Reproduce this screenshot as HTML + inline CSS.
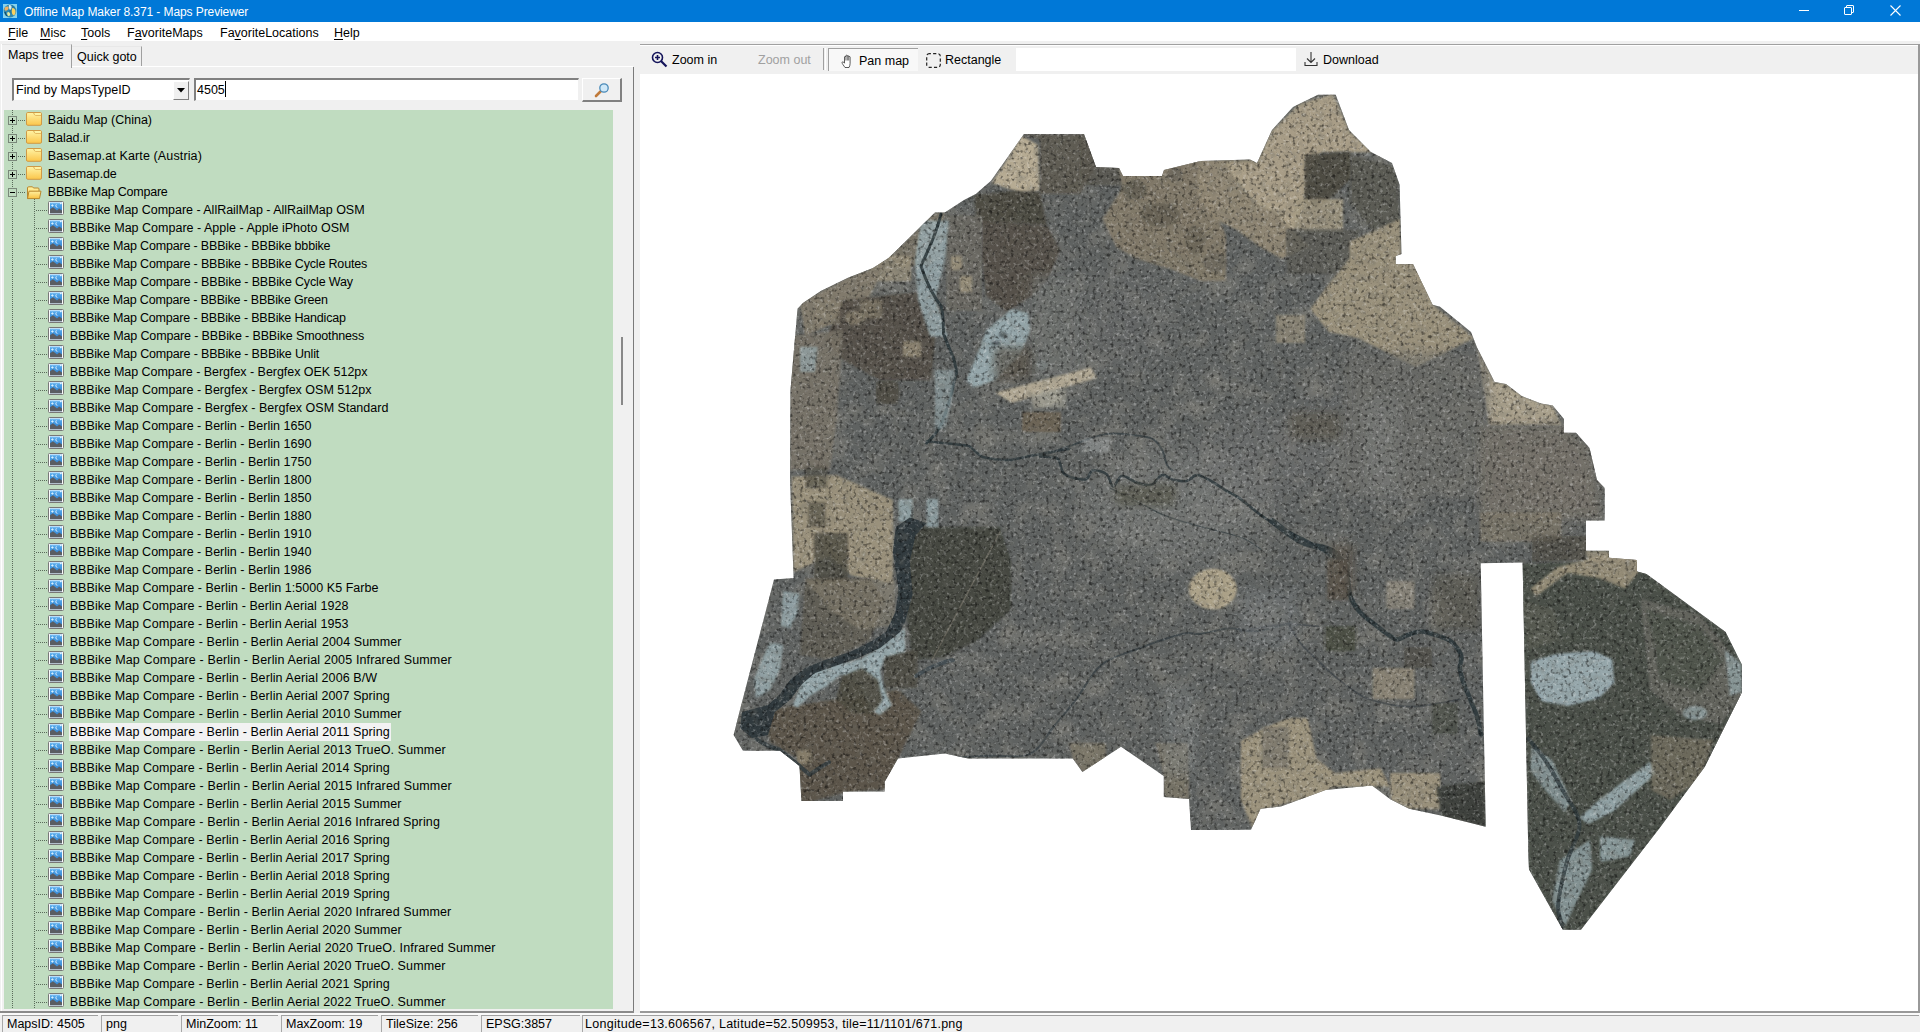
<!DOCTYPE html>
<html><head><meta charset="utf-8"><title>Offline Map Maker 8.371 - Maps Previewer</title>
<style>
*{box-sizing:border-box;margin:0;padding:0}
html,body{width:1920px;height:1032px;overflow:hidden;background:#f0f0f0;font-family:"Liberation Sans",sans-serif;color:#000}
.a{position:absolute}
#title{position:absolute;left:0;top:0;width:1920px;height:22px;background:#0078d7;color:#fff}
#title .t{position:absolute;left:24px;top:5px;font-size:12px;line-height:14px;white-space:pre;letter-spacing:-0.09px}
#menu{position:absolute;left:0;top:22px;width:1920px;height:19px;background:#fff}
#menu span{position:absolute;top:4px;font-size:12.5px;line-height:14px;white-space:pre}
#menu u{text-decoration:underline;text-underline-offset:1.5px;text-decoration-thickness:1px}
#left{position:absolute;left:0;top:41px;width:634px;height:971px;background:#f0f0f0}
.tab{position:absolute;font-size:12.5px;line-height:14px;white-space:pre}
#tree{position:absolute;left:4px;top:110px;width:609px;height:899px;background:#c0dcc0;overflow:hidden}
.tx{position:absolute;height:18px;font-size:12.5px;line-height:18px;white-space:pre;padding:0 1px}
.tx.hl{background:#f2f2f2}
.ic{position:absolute}
.pmbox{position:absolute;left:8px;width:9px;height:9px;border:1px solid #7a887a;background:#c0dcc0}
.pmh{position:absolute;height:1px;background:#000}
.hdot{position:absolute;height:1px;background-image:linear-gradient(90deg,#5a6a5a 50%,transparent 50%);background-size:2px 1px}
.vdot{position:absolute;width:1px;background-image:linear-gradient(180deg,#5a6a5a 50%,transparent 50%);background-size:1px 2px}
#right{position:absolute;left:640px;top:44px;width:1280px;height:968px;background:#fff}
#tb{position:absolute;left:640px;top:44px;width:1278px;height:30px;background:#f0f0f0;border-top:1px solid #a0a0a0;box-shadow:inset 0 1px 0 #fff}
.tbt{position:absolute;font-size:12.5px;line-height:14px;white-space:pre}
#status{position:absolute;left:0;top:1013px;width:1920px;height:19px;background:#f0f0f0;border-top:2px solid #fafafa}
.sp{position:absolute;top:0px;height:17px;font-size:12.5px;line-height:16px;white-space:pre;padding-left:4px;border-left:1px solid #a8a8a8;border-top:1px solid #a0a0a0}
</style></head><body>
<svg width="0" height="0" style="position:absolute"><defs><linearGradient id="fgrad" x1="0" y1="0" x2="0" y2="1"><stop offset="0" stop-color="#fff4a6"/><stop offset="1" stop-color="#fbc54a"/></linearGradient><linearGradient id="fgrad2" x1="0" y1="0" x2="0" y2="1"><stop offset="0" stop-color="#fff0a0"/><stop offset="1" stop-color="#f8c040"/></linearGradient><linearGradient id="sky" x1="0" y1="0" x2="0" y2="1"><stop offset="0" stop-color="#5ab0f0"/><stop offset="1" stop-color="#2a78c8"/></linearGradient></defs></svg>

<div id="title">
  <svg class="a" style="left:3px;top:4px" width="14" height="14" viewBox="0 0 14 14"><rect width="14" height="14" fill="#86d2ee"/><circle cx="7" cy="7" r="6.4" fill="#2f88b0"/><ellipse cx="9" cy="5.5" rx="3" ry="4" fill="#1c6a90" opacity="0.5"/><path d="M6,1 C8,0.8 9,2 8.5,4 C8,6 6.5,6.5 6.2,4.5 C6,3 5.5,2 6,1z" fill="#d8ecf0"/><path d="M1.5,5 C2,2.5 4,2 5.5,3 C6,4.5 5,6 3.5,6.5 C2.5,7 1.3,6.5 1.5,5z" fill="#f0b060"/><path d="M9.5,4 C11.5,4 12.8,6 12.5,8.5 C12.3,10.5 11,12 10,11 C9,10 8.5,8 8.8,6 C9,5 9,4.2 9.5,4z" fill="#f8d060"/><path d="M5,8 C6.5,8 7.5,9.5 7,11 C6.5,12.5 5,12.5 4.5,11 C4,10 4,8.5 5,8z" fill="#e8e8a0"/><path d="M2,8 C2.5,10 3.5,11.5 4,12" stroke="#0e3a50" stroke-width="1" fill="none"/></svg>
  <div class="t">Offline Map Maker 8.371 - Maps Previewer</div>
  <div class="a" style="left:1799px;top:10px;width:10px;height:1px;background:#fff"></div>
  <div class="a" style="left:1846px;top:5px;width:8px;height:8px;border:1px solid #fff;border-radius:1px"></div>
  <div class="a" style="left:1844px;top:7px;width:8px;height:8px;border:1px solid #fff;background:#0078d7;border-radius:1px"></div>
  <svg class="a" style="left:1890px;top:5px" width="11" height="11" viewBox="0 0 11 11"><path d="M0.5 0.5L10.5 10.5M10.5 0.5L0.5 10.5" stroke="#fff" stroke-width="1.1"/></svg>
</div>
<div id="menu">
  <span style="left:8px"><u>F</u>ile</span>
  <span style="left:40px"><u>M</u>isc</span>
  <span style="left:81px"><u>T</u>ools</span>
  <span style="left:127px">F<u>a</u>voriteMaps</span>
  <span style="left:220px">Fa<u>v</u>oriteLocations</span>
  <span style="left:334px"><u>H</u>elp</span>
</div>
<div id="left">
  <!-- tabs -->
  <div class="a" style="left:1px;top:3px;width:632px;height:968px;border-left:1px solid #fff"></div>
  <div class="a" style="left:2px;top:3px;width:70px;height:24px;background:#f0f0f0;border-top:1px solid #e3e3e3;border-right:1px solid #a0a0a0"></div>
  <div class="tab" style="left:8px;top:7px">Maps tree</div>
  <div class="a" style="left:72px;top:5px;width:70px;height:20px;border-right:1px solid #a0a0a0;border-top:1px solid #e8e8e8"></div>
  <div class="tab" style="left:77px;top:9px">Quick goto</div>
  <div class="a" style="left:72px;top:25px;width:561px;height:1px;background:#fff"></div>
  <!-- panel border right -->
  <div class="a" style="left:633px;top:26px;width:1px;height:945px;background:#7a7a7a"></div>
  <!-- combo -->
  <div class="a" style="left:12px;top:37px;width:178px;height:23px;background:#fff;border-top:2px solid #808080;border-left:2px solid #808080;border-right:1px solid #f0f0f0;border-bottom:1px solid #f0f0f0"></div>
  <div class="tab" style="left:16px;top:42px">Find by MapsTypeID</div>
  <div class="a" style="left:173px;top:40px;width:16px;height:19px;background:#f0f0f0;border-right:1px solid #808080;border-bottom:1px solid #808080;border-left:1px solid #fff;border-top:1px solid #fff"></div>
  <svg class="a" style="left:177px;top:47px" width="8" height="5" viewBox="0 0 8 5"><path d="M0 0h8L4 4.5z" fill="#000"/></svg>
  <!-- text input -->
  <div class="a" style="left:194px;top:37px;width:385px;height:23px;background:#fff;border-top:2px solid #808080;border-left:2px solid #808080;border-right:1px solid #f0f0f0;border-bottom:1px solid #f0f0f0"></div>
  <div class="tab" style="left:197px;top:42px">4505</div>
  <div class="a" style="left:225px;top:40px;width:1px;height:16px;background:#000"></div>
  <!-- search btn -->
  <div class="a" style="left:582px;top:37px;width:40px;height:24px;background:#f0f0f0;border-top:1px solid #fff;border-left:1px solid #fff;border-right:2px solid #808080;border-bottom:2px solid #808080"></div>
  <svg class="a" style="left:593px;top:40px" width="18" height="18" viewBox="0 0 18 18"><path d="M3 15l4.5-4.5" stroke="#c07a3a" stroke-width="2.6" stroke-linecap="round"/><circle cx="11" cy="7" r="4.2" fill="#cfe8f8" stroke="#4a8ab8" stroke-width="1.3"/></svg>
  <!-- scroll thumb -->
  <div class="a" style="left:621px;top:296px;width:2px;height:68px;background:#888"></div>
</div>
<div id="tree">
  <div class="vdot" style="left:8px;top:0px;height:84px"></div>
  <div class="vdot" style="left:30px;top:89px;height:810px"></div>
  <div class="vdot" style="left:8px;top:89px;height:810px"></div>
</div>
<div id="treeItems" class="a" style="left:0;top:0;width:613px;height:1009px;overflow:hidden">
<div class="pmbox" style="top:116px"></div>
<div class="pmh" style="top:120px;left:10px;width:5px"></div>
<div class="pmh" style="top:118px;left:12px;width:1px;height:5px"></div>
<div class="hdot" style="top:120px;left:18px;width:8px"></div>
<svg class="ic" style="left:26px;top:112px" width="16" height="14" viewBox="0 0 16 14"><rect x="0.5" y="0.5" width="15" height="12.8" rx="1.3" fill="url(#fgrad)" stroke="#cf9a46"/><path d="M7.6,0.9 Q8.2,3.3 9.8,3.3 H15.1" fill="none" stroke="#dcae55" stroke-width="1"/><rect x="9" y="1.2" width="6" height="1.8" fill="#fff6a8" opacity="0.8"/></svg>
<div class="tx" style="left:46.8px;top:111px;letter-spacing:-0.001px">Baidu Map (China)</div>
<div class="pmbox" style="top:134px"></div>
<div class="pmh" style="top:138px;left:10px;width:5px"></div>
<div class="pmh" style="top:136px;left:12px;width:1px;height:5px"></div>
<div class="hdot" style="top:138px;left:18px;width:8px"></div>
<svg class="ic" style="left:26px;top:130px" width="16" height="14" viewBox="0 0 16 14"><rect x="0.5" y="0.5" width="15" height="12.8" rx="1.3" fill="url(#fgrad)" stroke="#cf9a46"/><path d="M7.6,0.9 Q8.2,3.3 9.8,3.3 H15.1" fill="none" stroke="#dcae55" stroke-width="1"/><rect x="9" y="1.2" width="6" height="1.8" fill="#fff6a8" opacity="0.8"/></svg>
<div class="tx" style="left:46.8px;top:129px;letter-spacing:-0.049px">Balad.ir</div>
<div class="pmbox" style="top:152px"></div>
<div class="pmh" style="top:156px;left:10px;width:5px"></div>
<div class="pmh" style="top:154px;left:12px;width:1px;height:5px"></div>
<div class="hdot" style="top:156px;left:18px;width:8px"></div>
<svg class="ic" style="left:26px;top:148px" width="16" height="14" viewBox="0 0 16 14"><rect x="0.5" y="0.5" width="15" height="12.8" rx="1.3" fill="url(#fgrad)" stroke="#cf9a46"/><path d="M7.6,0.9 Q8.2,3.3 9.8,3.3 H15.1" fill="none" stroke="#dcae55" stroke-width="1"/><rect x="9" y="1.2" width="6" height="1.8" fill="#fff6a8" opacity="0.8"/></svg>
<div class="tx" style="left:46.8px;top:147px;letter-spacing:0.132px">Basemap.at Karte (Austria)</div>
<div class="pmbox" style="top:170px"></div>
<div class="pmh" style="top:174px;left:10px;width:5px"></div>
<div class="pmh" style="top:172px;left:12px;width:1px;height:5px"></div>
<div class="hdot" style="top:174px;left:18px;width:8px"></div>
<svg class="ic" style="left:26px;top:166px" width="16" height="14" viewBox="0 0 16 14"><rect x="0.5" y="0.5" width="15" height="12.8" rx="1.3" fill="url(#fgrad)" stroke="#cf9a46"/><path d="M7.6,0.9 Q8.2,3.3 9.8,3.3 H15.1" fill="none" stroke="#dcae55" stroke-width="1"/><rect x="9" y="1.2" width="6" height="1.8" fill="#fff6a8" opacity="0.8"/></svg>
<div class="tx" style="left:46.8px;top:165px;letter-spacing:-0.139px">Basemap.de</div>
<div class="pmbox" style="top:188px"></div>
<div class="pmh" style="top:192px;left:10px;width:5px"></div>
<div class="hdot" style="top:192px;left:18px;width:8px"></div>
<svg class="ic" style="left:26px;top:186px" width="16" height="14" viewBox="0 0 16 14"><path d="M1.5,12.5 V2 Q1.5,0.8 2.7,0.8 H6.5 L7.5,2 H12 Q13,2 13,3 V5" fill="url(#fgrad)" stroke="#b8862c"/><path d="M1.5,12.6 L3,5.2 H15 L13.5,12.6 Z" fill="url(#fgrad2)" stroke="#b8862c" stroke-linejoin="round"/></svg>
<div class="tx" style="left:46.8px;top:183px;letter-spacing:-0.215px">BBBike Map Compare</div>
<div class="hdot" style="top:210px;left:36px;width:12px"></div>
<svg class="ic" style="left:48px;top:201px" width="16" height="14" viewBox="0 0 16 14"><rect x="0.5" y="0.5" width="15" height="13" rx="1" fill="#fbfbfb" stroke="#777"/><rect x="2" y="1.6" width="12" height="10.6" fill="url(#sky)"/><path d="M2,12.2 V8.2 L5,6.2 L9,9.4 L11.2,7.6 L14,9.6 V12.2 Z" fill="#5a5d62"/><path d="M9.2,3 a1.8,1.8 0 1 0 1.4,3 a1.3,1.3 0 1 1 -1.4,-3z" fill="#f0f8ff"/><path d="M3.2,4.5h2.4M4.4,3.3v2.4" stroke="#d8f0ff" stroke-width="0.9"/><path d="M12,2.5h1.6M12.8,1.7v1.6" stroke="#fff" stroke-width="0.8"/><rect x="2.4" y="1.6" width="11.2" height="0.8" fill="#bfe3ff" opacity="0.6"/></svg>
<div class="tx" style="left:68.7px;top:201px;letter-spacing:-0.022px">BBBike Map Compare - AllRailMap - AllRailMap OSM</div>
<div class="hdot" style="top:228px;left:36px;width:12px"></div>
<svg class="ic" style="left:48px;top:219px" width="16" height="14" viewBox="0 0 16 14"><rect x="0.5" y="0.5" width="15" height="13" rx="1" fill="#fbfbfb" stroke="#777"/><rect x="2" y="1.6" width="12" height="10.6" fill="url(#sky)"/><path d="M2,12.2 V8.2 L5,6.2 L9,9.4 L11.2,7.6 L14,9.6 V12.2 Z" fill="#5a5d62"/><path d="M9.2,3 a1.8,1.8 0 1 0 1.4,3 a1.3,1.3 0 1 1 -1.4,-3z" fill="#f0f8ff"/><path d="M3.2,4.5h2.4M4.4,3.3v2.4" stroke="#d8f0ff" stroke-width="0.9"/><path d="M12,2.5h1.6M12.8,1.7v1.6" stroke="#fff" stroke-width="0.8"/><rect x="2.4" y="1.6" width="11.2" height="0.8" fill="#bfe3ff" opacity="0.6"/></svg>
<div class="tx" style="left:68.7px;top:219px;letter-spacing:0.009px">BBBike Map Compare - Apple - Apple iPhoto OSM</div>
<div class="hdot" style="top:246px;left:36px;width:12px"></div>
<svg class="ic" style="left:48px;top:237px" width="16" height="14" viewBox="0 0 16 14"><rect x="0.5" y="0.5" width="15" height="13" rx="1" fill="#fbfbfb" stroke="#777"/><rect x="2" y="1.6" width="12" height="10.6" fill="url(#sky)"/><path d="M2,12.2 V8.2 L5,6.2 L9,9.4 L11.2,7.6 L14,9.6 V12.2 Z" fill="#5a5d62"/><path d="M9.2,3 a1.8,1.8 0 1 0 1.4,3 a1.3,1.3 0 1 1 -1.4,-3z" fill="#f0f8ff"/><path d="M3.2,4.5h2.4M4.4,3.3v2.4" stroke="#d8f0ff" stroke-width="0.9"/><path d="M12,2.5h1.6M12.8,1.7v1.6" stroke="#fff" stroke-width="0.8"/><rect x="2.4" y="1.6" width="11.2" height="0.8" fill="#bfe3ff" opacity="0.6"/></svg>
<div class="tx" style="left:68.7px;top:237px;letter-spacing:-0.174px">BBBike Map Compare - BBBike - BBBike bbbike</div>
<div class="hdot" style="top:264px;left:36px;width:12px"></div>
<svg class="ic" style="left:48px;top:255px" width="16" height="14" viewBox="0 0 16 14"><rect x="0.5" y="0.5" width="15" height="13" rx="1" fill="#fbfbfb" stroke="#777"/><rect x="2" y="1.6" width="12" height="10.6" fill="url(#sky)"/><path d="M2,12.2 V8.2 L5,6.2 L9,9.4 L11.2,7.6 L14,9.6 V12.2 Z" fill="#5a5d62"/><path d="M9.2,3 a1.8,1.8 0 1 0 1.4,3 a1.3,1.3 0 1 1 -1.4,-3z" fill="#f0f8ff"/><path d="M3.2,4.5h2.4M4.4,3.3v2.4" stroke="#d8f0ff" stroke-width="0.9"/><path d="M12,2.5h1.6M12.8,1.7v1.6" stroke="#fff" stroke-width="0.8"/><rect x="2.4" y="1.6" width="11.2" height="0.8" fill="#bfe3ff" opacity="0.6"/></svg>
<div class="tx" style="left:68.7px;top:255px;letter-spacing:-0.169px">BBBike Map Compare - BBBike - BBBike Cycle Routes</div>
<div class="hdot" style="top:282px;left:36px;width:12px"></div>
<svg class="ic" style="left:48px;top:273px" width="16" height="14" viewBox="0 0 16 14"><rect x="0.5" y="0.5" width="15" height="13" rx="1" fill="#fbfbfb" stroke="#777"/><rect x="2" y="1.6" width="12" height="10.6" fill="url(#sky)"/><path d="M2,12.2 V8.2 L5,6.2 L9,9.4 L11.2,7.6 L14,9.6 V12.2 Z" fill="#5a5d62"/><path d="M9.2,3 a1.8,1.8 0 1 0 1.4,3 a1.3,1.3 0 1 1 -1.4,-3z" fill="#f0f8ff"/><path d="M3.2,4.5h2.4M4.4,3.3v2.4" stroke="#d8f0ff" stroke-width="0.9"/><path d="M12,2.5h1.6M12.8,1.7v1.6" stroke="#fff" stroke-width="0.8"/><rect x="2.4" y="1.6" width="11.2" height="0.8" fill="#bfe3ff" opacity="0.6"/></svg>
<div class="tx" style="left:68.7px;top:273px;letter-spacing:-0.163px">BBBike Map Compare - BBBike - BBBike Cycle Way</div>
<div class="hdot" style="top:300px;left:36px;width:12px"></div>
<svg class="ic" style="left:48px;top:291px" width="16" height="14" viewBox="0 0 16 14"><rect x="0.5" y="0.5" width="15" height="13" rx="1" fill="#fbfbfb" stroke="#777"/><rect x="2" y="1.6" width="12" height="10.6" fill="url(#sky)"/><path d="M2,12.2 V8.2 L5,6.2 L9,9.4 L11.2,7.6 L14,9.6 V12.2 Z" fill="#5a5d62"/><path d="M9.2,3 a1.8,1.8 0 1 0 1.4,3 a1.3,1.3 0 1 1 -1.4,-3z" fill="#f0f8ff"/><path d="M3.2,4.5h2.4M4.4,3.3v2.4" stroke="#d8f0ff" stroke-width="0.9"/><path d="M12,2.5h1.6M12.8,1.7v1.6" stroke="#fff" stroke-width="0.8"/><rect x="2.4" y="1.6" width="11.2" height="0.8" fill="#bfe3ff" opacity="0.6"/></svg>
<div class="tx" style="left:68.7px;top:291px;letter-spacing:-0.192px">BBBike Map Compare - BBBike - BBBike Green</div>
<div class="hdot" style="top:318px;left:36px;width:12px"></div>
<svg class="ic" style="left:48px;top:309px" width="16" height="14" viewBox="0 0 16 14"><rect x="0.5" y="0.5" width="15" height="13" rx="1" fill="#fbfbfb" stroke="#777"/><rect x="2" y="1.6" width="12" height="10.6" fill="url(#sky)"/><path d="M2,12.2 V8.2 L5,6.2 L9,9.4 L11.2,7.6 L14,9.6 V12.2 Z" fill="#5a5d62"/><path d="M9.2,3 a1.8,1.8 0 1 0 1.4,3 a1.3,1.3 0 1 1 -1.4,-3z" fill="#f0f8ff"/><path d="M3.2,4.5h2.4M4.4,3.3v2.4" stroke="#d8f0ff" stroke-width="0.9"/><path d="M12,2.5h1.6M12.8,1.7v1.6" stroke="#fff" stroke-width="0.8"/><rect x="2.4" y="1.6" width="11.2" height="0.8" fill="#bfe3ff" opacity="0.6"/></svg>
<div class="tx" style="left:68.7px;top:309px;letter-spacing:-0.179px">BBBike Map Compare - BBBike - BBBike Handicap</div>
<div class="hdot" style="top:336px;left:36px;width:12px"></div>
<svg class="ic" style="left:48px;top:327px" width="16" height="14" viewBox="0 0 16 14"><rect x="0.5" y="0.5" width="15" height="13" rx="1" fill="#fbfbfb" stroke="#777"/><rect x="2" y="1.6" width="12" height="10.6" fill="url(#sky)"/><path d="M2,12.2 V8.2 L5,6.2 L9,9.4 L11.2,7.6 L14,9.6 V12.2 Z" fill="#5a5d62"/><path d="M9.2,3 a1.8,1.8 0 1 0 1.4,3 a1.3,1.3 0 1 1 -1.4,-3z" fill="#f0f8ff"/><path d="M3.2,4.5h2.4M4.4,3.3v2.4" stroke="#d8f0ff" stroke-width="0.9"/><path d="M12,2.5h1.6M12.8,1.7v1.6" stroke="#fff" stroke-width="0.8"/><rect x="2.4" y="1.6" width="11.2" height="0.8" fill="#bfe3ff" opacity="0.6"/></svg>
<div class="tx" style="left:68.7px;top:327px;letter-spacing:-0.137px">BBBike Map Compare - BBBike - BBBike Smoothness</div>
<div class="hdot" style="top:354px;left:36px;width:12px"></div>
<svg class="ic" style="left:48px;top:345px" width="16" height="14" viewBox="0 0 16 14"><rect x="0.5" y="0.5" width="15" height="13" rx="1" fill="#fbfbfb" stroke="#777"/><rect x="2" y="1.6" width="12" height="10.6" fill="url(#sky)"/><path d="M2,12.2 V8.2 L5,6.2 L9,9.4 L11.2,7.6 L14,9.6 V12.2 Z" fill="#5a5d62"/><path d="M9.2,3 a1.8,1.8 0 1 0 1.4,3 a1.3,1.3 0 1 1 -1.4,-3z" fill="#f0f8ff"/><path d="M3.2,4.5h2.4M4.4,3.3v2.4" stroke="#d8f0ff" stroke-width="0.9"/><path d="M12,2.5h1.6M12.8,1.7v1.6" stroke="#fff" stroke-width="0.8"/><rect x="2.4" y="1.6" width="11.2" height="0.8" fill="#bfe3ff" opacity="0.6"/></svg>
<div class="tx" style="left:68.7px;top:345px;letter-spacing:-0.165px">BBBike Map Compare - BBBike - BBBike Unlit</div>
<div class="hdot" style="top:372px;left:36px;width:12px"></div>
<svg class="ic" style="left:48px;top:363px" width="16" height="14" viewBox="0 0 16 14"><rect x="0.5" y="0.5" width="15" height="13" rx="1" fill="#fbfbfb" stroke="#777"/><rect x="2" y="1.6" width="12" height="10.6" fill="url(#sky)"/><path d="M2,12.2 V8.2 L5,6.2 L9,9.4 L11.2,7.6 L14,9.6 V12.2 Z" fill="#5a5d62"/><path d="M9.2,3 a1.8,1.8 0 1 0 1.4,3 a1.3,1.3 0 1 1 -1.4,-3z" fill="#f0f8ff"/><path d="M3.2,4.5h2.4M4.4,3.3v2.4" stroke="#d8f0ff" stroke-width="0.9"/><path d="M12,2.5h1.6M12.8,1.7v1.6" stroke="#fff" stroke-width="0.8"/><rect x="2.4" y="1.6" width="11.2" height="0.8" fill="#bfe3ff" opacity="0.6"/></svg>
<div class="tx" style="left:68.7px;top:363px;letter-spacing:-0.034px">BBBike Map Compare - Bergfex - Bergfex OEK 512px</div>
<div class="hdot" style="top:390px;left:36px;width:12px"></div>
<svg class="ic" style="left:48px;top:381px" width="16" height="14" viewBox="0 0 16 14"><rect x="0.5" y="0.5" width="15" height="13" rx="1" fill="#fbfbfb" stroke="#777"/><rect x="2" y="1.6" width="12" height="10.6" fill="url(#sky)"/><path d="M2,12.2 V8.2 L5,6.2 L9,9.4 L11.2,7.6 L14,9.6 V12.2 Z" fill="#5a5d62"/><path d="M9.2,3 a1.8,1.8 0 1 0 1.4,3 a1.3,1.3 0 1 1 -1.4,-3z" fill="#f0f8ff"/><path d="M3.2,4.5h2.4M4.4,3.3v2.4" stroke="#d8f0ff" stroke-width="0.9"/><path d="M12,2.5h1.6M12.8,1.7v1.6" stroke="#fff" stroke-width="0.8"/><rect x="2.4" y="1.6" width="11.2" height="0.8" fill="#bfe3ff" opacity="0.6"/></svg>
<div class="tx" style="left:68.7px;top:381px;letter-spacing:0.004px">BBBike Map Compare - Bergfex - Bergfex OSM 512px</div>
<div class="hdot" style="top:408px;left:36px;width:12px"></div>
<svg class="ic" style="left:48px;top:399px" width="16" height="14" viewBox="0 0 16 14"><rect x="0.5" y="0.5" width="15" height="13" rx="1" fill="#fbfbfb" stroke="#777"/><rect x="2" y="1.6" width="12" height="10.6" fill="url(#sky)"/><path d="M2,12.2 V8.2 L5,6.2 L9,9.4 L11.2,7.6 L14,9.6 V12.2 Z" fill="#5a5d62"/><path d="M9.2,3 a1.8,1.8 0 1 0 1.4,3 a1.3,1.3 0 1 1 -1.4,-3z" fill="#f0f8ff"/><path d="M3.2,4.5h2.4M4.4,3.3v2.4" stroke="#d8f0ff" stroke-width="0.9"/><path d="M12,2.5h1.6M12.8,1.7v1.6" stroke="#fff" stroke-width="0.8"/><rect x="2.4" y="1.6" width="11.2" height="0.8" fill="#bfe3ff" opacity="0.6"/></svg>
<div class="tx" style="left:68.7px;top:399px;letter-spacing:0.010px">BBBike Map Compare - Bergfex - Bergfex OSM Standard</div>
<div class="hdot" style="top:426px;left:36px;width:12px"></div>
<svg class="ic" style="left:48px;top:417px" width="16" height="14" viewBox="0 0 16 14"><rect x="0.5" y="0.5" width="15" height="13" rx="1" fill="#fbfbfb" stroke="#777"/><rect x="2" y="1.6" width="12" height="10.6" fill="url(#sky)"/><path d="M2,12.2 V8.2 L5,6.2 L9,9.4 L11.2,7.6 L14,9.6 V12.2 Z" fill="#5a5d62"/><path d="M9.2,3 a1.8,1.8 0 1 0 1.4,3 a1.3,1.3 0 1 1 -1.4,-3z" fill="#f0f8ff"/><path d="M3.2,4.5h2.4M4.4,3.3v2.4" stroke="#d8f0ff" stroke-width="0.9"/><path d="M12,2.5h1.6M12.8,1.7v1.6" stroke="#fff" stroke-width="0.8"/><rect x="2.4" y="1.6" width="11.2" height="0.8" fill="#bfe3ff" opacity="0.6"/></svg>
<div class="tx" style="left:68.7px;top:417px;letter-spacing:0.015px">BBBike Map Compare - Berlin - Berlin 1650</div>
<div class="hdot" style="top:444px;left:36px;width:12px"></div>
<svg class="ic" style="left:48px;top:435px" width="16" height="14" viewBox="0 0 16 14"><rect x="0.5" y="0.5" width="15" height="13" rx="1" fill="#fbfbfb" stroke="#777"/><rect x="2" y="1.6" width="12" height="10.6" fill="url(#sky)"/><path d="M2,12.2 V8.2 L5,6.2 L9,9.4 L11.2,7.6 L14,9.6 V12.2 Z" fill="#5a5d62"/><path d="M9.2,3 a1.8,1.8 0 1 0 1.4,3 a1.3,1.3 0 1 1 -1.4,-3z" fill="#f0f8ff"/><path d="M3.2,4.5h2.4M4.4,3.3v2.4" stroke="#d8f0ff" stroke-width="0.9"/><path d="M12,2.5h1.6M12.8,1.7v1.6" stroke="#fff" stroke-width="0.8"/><rect x="2.4" y="1.6" width="11.2" height="0.8" fill="#bfe3ff" opacity="0.6"/></svg>
<div class="tx" style="left:68.7px;top:435px;letter-spacing:0.015px">BBBike Map Compare - Berlin - Berlin 1690</div>
<div class="hdot" style="top:462px;left:36px;width:12px"></div>
<svg class="ic" style="left:48px;top:453px" width="16" height="14" viewBox="0 0 16 14"><rect x="0.5" y="0.5" width="15" height="13" rx="1" fill="#fbfbfb" stroke="#777"/><rect x="2" y="1.6" width="12" height="10.6" fill="url(#sky)"/><path d="M2,12.2 V8.2 L5,6.2 L9,9.4 L11.2,7.6 L14,9.6 V12.2 Z" fill="#5a5d62"/><path d="M9.2,3 a1.8,1.8 0 1 0 1.4,3 a1.3,1.3 0 1 1 -1.4,-3z" fill="#f0f8ff"/><path d="M3.2,4.5h2.4M4.4,3.3v2.4" stroke="#d8f0ff" stroke-width="0.9"/><path d="M12,2.5h1.6M12.8,1.7v1.6" stroke="#fff" stroke-width="0.8"/><rect x="2.4" y="1.6" width="11.2" height="0.8" fill="#bfe3ff" opacity="0.6"/></svg>
<div class="tx" style="left:68.7px;top:453px;letter-spacing:0.015px">BBBike Map Compare - Berlin - Berlin 1750</div>
<div class="hdot" style="top:480px;left:36px;width:12px"></div>
<svg class="ic" style="left:48px;top:471px" width="16" height="14" viewBox="0 0 16 14"><rect x="0.5" y="0.5" width="15" height="13" rx="1" fill="#fbfbfb" stroke="#777"/><rect x="2" y="1.6" width="12" height="10.6" fill="url(#sky)"/><path d="M2,12.2 V8.2 L5,6.2 L9,9.4 L11.2,7.6 L14,9.6 V12.2 Z" fill="#5a5d62"/><path d="M9.2,3 a1.8,1.8 0 1 0 1.4,3 a1.3,1.3 0 1 1 -1.4,-3z" fill="#f0f8ff"/><path d="M3.2,4.5h2.4M4.4,3.3v2.4" stroke="#d8f0ff" stroke-width="0.9"/><path d="M12,2.5h1.6M12.8,1.7v1.6" stroke="#fff" stroke-width="0.8"/><rect x="2.4" y="1.6" width="11.2" height="0.8" fill="#bfe3ff" opacity="0.6"/></svg>
<div class="tx" style="left:68.7px;top:471px;letter-spacing:0.015px">BBBike Map Compare - Berlin - Berlin 1800</div>
<div class="hdot" style="top:498px;left:36px;width:12px"></div>
<svg class="ic" style="left:48px;top:489px" width="16" height="14" viewBox="0 0 16 14"><rect x="0.5" y="0.5" width="15" height="13" rx="1" fill="#fbfbfb" stroke="#777"/><rect x="2" y="1.6" width="12" height="10.6" fill="url(#sky)"/><path d="M2,12.2 V8.2 L5,6.2 L9,9.4 L11.2,7.6 L14,9.6 V12.2 Z" fill="#5a5d62"/><path d="M9.2,3 a1.8,1.8 0 1 0 1.4,3 a1.3,1.3 0 1 1 -1.4,-3z" fill="#f0f8ff"/><path d="M3.2,4.5h2.4M4.4,3.3v2.4" stroke="#d8f0ff" stroke-width="0.9"/><path d="M12,2.5h1.6M12.8,1.7v1.6" stroke="#fff" stroke-width="0.8"/><rect x="2.4" y="1.6" width="11.2" height="0.8" fill="#bfe3ff" opacity="0.6"/></svg>
<div class="tx" style="left:68.7px;top:489px;letter-spacing:0.015px">BBBike Map Compare - Berlin - Berlin 1850</div>
<div class="hdot" style="top:516px;left:36px;width:12px"></div>
<svg class="ic" style="left:48px;top:507px" width="16" height="14" viewBox="0 0 16 14"><rect x="0.5" y="0.5" width="15" height="13" rx="1" fill="#fbfbfb" stroke="#777"/><rect x="2" y="1.6" width="12" height="10.6" fill="url(#sky)"/><path d="M2,12.2 V8.2 L5,6.2 L9,9.4 L11.2,7.6 L14,9.6 V12.2 Z" fill="#5a5d62"/><path d="M9.2,3 a1.8,1.8 0 1 0 1.4,3 a1.3,1.3 0 1 1 -1.4,-3z" fill="#f0f8ff"/><path d="M3.2,4.5h2.4M4.4,3.3v2.4" stroke="#d8f0ff" stroke-width="0.9"/><path d="M12,2.5h1.6M12.8,1.7v1.6" stroke="#fff" stroke-width="0.8"/><rect x="2.4" y="1.6" width="11.2" height="0.8" fill="#bfe3ff" opacity="0.6"/></svg>
<div class="tx" style="left:68.7px;top:507px;letter-spacing:0.015px">BBBike Map Compare - Berlin - Berlin 1880</div>
<div class="hdot" style="top:534px;left:36px;width:12px"></div>
<svg class="ic" style="left:48px;top:525px" width="16" height="14" viewBox="0 0 16 14"><rect x="0.5" y="0.5" width="15" height="13" rx="1" fill="#fbfbfb" stroke="#777"/><rect x="2" y="1.6" width="12" height="10.6" fill="url(#sky)"/><path d="M2,12.2 V8.2 L5,6.2 L9,9.4 L11.2,7.6 L14,9.6 V12.2 Z" fill="#5a5d62"/><path d="M9.2,3 a1.8,1.8 0 1 0 1.4,3 a1.3,1.3 0 1 1 -1.4,-3z" fill="#f0f8ff"/><path d="M3.2,4.5h2.4M4.4,3.3v2.4" stroke="#d8f0ff" stroke-width="0.9"/><path d="M12,2.5h1.6M12.8,1.7v1.6" stroke="#fff" stroke-width="0.8"/><rect x="2.4" y="1.6" width="11.2" height="0.8" fill="#bfe3ff" opacity="0.6"/></svg>
<div class="tx" style="left:68.7px;top:525px;letter-spacing:0.015px">BBBike Map Compare - Berlin - Berlin 1910</div>
<div class="hdot" style="top:552px;left:36px;width:12px"></div>
<svg class="ic" style="left:48px;top:543px" width="16" height="14" viewBox="0 0 16 14"><rect x="0.5" y="0.5" width="15" height="13" rx="1" fill="#fbfbfb" stroke="#777"/><rect x="2" y="1.6" width="12" height="10.6" fill="url(#sky)"/><path d="M2,12.2 V8.2 L5,6.2 L9,9.4 L11.2,7.6 L14,9.6 V12.2 Z" fill="#5a5d62"/><path d="M9.2,3 a1.8,1.8 0 1 0 1.4,3 a1.3,1.3 0 1 1 -1.4,-3z" fill="#f0f8ff"/><path d="M3.2,4.5h2.4M4.4,3.3v2.4" stroke="#d8f0ff" stroke-width="0.9"/><path d="M12,2.5h1.6M12.8,1.7v1.6" stroke="#fff" stroke-width="0.8"/><rect x="2.4" y="1.6" width="11.2" height="0.8" fill="#bfe3ff" opacity="0.6"/></svg>
<div class="tx" style="left:68.7px;top:543px;letter-spacing:0.015px">BBBike Map Compare - Berlin - Berlin 1940</div>
<div class="hdot" style="top:570px;left:36px;width:12px"></div>
<svg class="ic" style="left:48px;top:561px" width="16" height="14" viewBox="0 0 16 14"><rect x="0.5" y="0.5" width="15" height="13" rx="1" fill="#fbfbfb" stroke="#777"/><rect x="2" y="1.6" width="12" height="10.6" fill="url(#sky)"/><path d="M2,12.2 V8.2 L5,6.2 L9,9.4 L11.2,7.6 L14,9.6 V12.2 Z" fill="#5a5d62"/><path d="M9.2,3 a1.8,1.8 0 1 0 1.4,3 a1.3,1.3 0 1 1 -1.4,-3z" fill="#f0f8ff"/><path d="M3.2,4.5h2.4M4.4,3.3v2.4" stroke="#d8f0ff" stroke-width="0.9"/><path d="M12,2.5h1.6M12.8,1.7v1.6" stroke="#fff" stroke-width="0.8"/><rect x="2.4" y="1.6" width="11.2" height="0.8" fill="#bfe3ff" opacity="0.6"/></svg>
<div class="tx" style="left:68.7px;top:561px;letter-spacing:0.015px">BBBike Map Compare - Berlin - Berlin 1986</div>
<div class="hdot" style="top:588px;left:36px;width:12px"></div>
<svg class="ic" style="left:48px;top:579px" width="16" height="14" viewBox="0 0 16 14"><rect x="0.5" y="0.5" width="15" height="13" rx="1" fill="#fbfbfb" stroke="#777"/><rect x="2" y="1.6" width="12" height="10.6" fill="url(#sky)"/><path d="M2,12.2 V8.2 L5,6.2 L9,9.4 L11.2,7.6 L14,9.6 V12.2 Z" fill="#5a5d62"/><path d="M9.2,3 a1.8,1.8 0 1 0 1.4,3 a1.3,1.3 0 1 1 -1.4,-3z" fill="#f0f8ff"/><path d="M3.2,4.5h2.4M4.4,3.3v2.4" stroke="#d8f0ff" stroke-width="0.9"/><path d="M12,2.5h1.6M12.8,1.7v1.6" stroke="#fff" stroke-width="0.8"/><rect x="2.4" y="1.6" width="11.2" height="0.8" fill="#bfe3ff" opacity="0.6"/></svg>
<div class="tx" style="left:68.7px;top:579px;letter-spacing:0.048px">BBBike Map Compare - Berlin - Berlin 1:5000 K5 Farbe</div>
<div class="hdot" style="top:606px;left:36px;width:12px"></div>
<svg class="ic" style="left:48px;top:597px" width="16" height="14" viewBox="0 0 16 14"><rect x="0.5" y="0.5" width="15" height="13" rx="1" fill="#fbfbfb" stroke="#777"/><rect x="2" y="1.6" width="12" height="10.6" fill="url(#sky)"/><path d="M2,12.2 V8.2 L5,6.2 L9,9.4 L11.2,7.6 L14,9.6 V12.2 Z" fill="#5a5d62"/><path d="M9.2,3 a1.8,1.8 0 1 0 1.4,3 a1.3,1.3 0 1 1 -1.4,-3z" fill="#f0f8ff"/><path d="M3.2,4.5h2.4M4.4,3.3v2.4" stroke="#d8f0ff" stroke-width="0.9"/><path d="M12,2.5h1.6M12.8,1.7v1.6" stroke="#fff" stroke-width="0.8"/><rect x="2.4" y="1.6" width="11.2" height="0.8" fill="#bfe3ff" opacity="0.6"/></svg>
<div class="tx" style="left:68.7px;top:597px;letter-spacing:0.062px">BBBike Map Compare - Berlin - Berlin Aerial 1928</div>
<div class="hdot" style="top:624px;left:36px;width:12px"></div>
<svg class="ic" style="left:48px;top:615px" width="16" height="14" viewBox="0 0 16 14"><rect x="0.5" y="0.5" width="15" height="13" rx="1" fill="#fbfbfb" stroke="#777"/><rect x="2" y="1.6" width="12" height="10.6" fill="url(#sky)"/><path d="M2,12.2 V8.2 L5,6.2 L9,9.4 L11.2,7.6 L14,9.6 V12.2 Z" fill="#5a5d62"/><path d="M9.2,3 a1.8,1.8 0 1 0 1.4,3 a1.3,1.3 0 1 1 -1.4,-3z" fill="#f0f8ff"/><path d="M3.2,4.5h2.4M4.4,3.3v2.4" stroke="#d8f0ff" stroke-width="0.9"/><path d="M12,2.5h1.6M12.8,1.7v1.6" stroke="#fff" stroke-width="0.8"/><rect x="2.4" y="1.6" width="11.2" height="0.8" fill="#bfe3ff" opacity="0.6"/></svg>
<div class="tx" style="left:68.7px;top:615px;letter-spacing:0.062px">BBBike Map Compare - Berlin - Berlin Aerial 1953</div>
<div class="hdot" style="top:642px;left:36px;width:12px"></div>
<svg class="ic" style="left:48px;top:633px" width="16" height="14" viewBox="0 0 16 14"><rect x="0.5" y="0.5" width="15" height="13" rx="1" fill="#fbfbfb" stroke="#777"/><rect x="2" y="1.6" width="12" height="10.6" fill="url(#sky)"/><path d="M2,12.2 V8.2 L5,6.2 L9,9.4 L11.2,7.6 L14,9.6 V12.2 Z" fill="#5a5d62"/><path d="M9.2,3 a1.8,1.8 0 1 0 1.4,3 a1.3,1.3 0 1 1 -1.4,-3z" fill="#f0f8ff"/><path d="M3.2,4.5h2.4M4.4,3.3v2.4" stroke="#d8f0ff" stroke-width="0.9"/><path d="M12,2.5h1.6M12.8,1.7v1.6" stroke="#fff" stroke-width="0.8"/><rect x="2.4" y="1.6" width="11.2" height="0.8" fill="#bfe3ff" opacity="0.6"/></svg>
<div class="tx" style="left:68.7px;top:633px;letter-spacing:0.098px">BBBike Map Compare - Berlin - Berlin Aerial 2004 Summer</div>
<div class="hdot" style="top:660px;left:36px;width:12px"></div>
<svg class="ic" style="left:48px;top:651px" width="16" height="14" viewBox="0 0 16 14"><rect x="0.5" y="0.5" width="15" height="13" rx="1" fill="#fbfbfb" stroke="#777"/><rect x="2" y="1.6" width="12" height="10.6" fill="url(#sky)"/><path d="M2,12.2 V8.2 L5,6.2 L9,9.4 L11.2,7.6 L14,9.6 V12.2 Z" fill="#5a5d62"/><path d="M9.2,3 a1.8,1.8 0 1 0 1.4,3 a1.3,1.3 0 1 1 -1.4,-3z" fill="#f0f8ff"/><path d="M3.2,4.5h2.4M4.4,3.3v2.4" stroke="#d8f0ff" stroke-width="0.9"/><path d="M12,2.5h1.6M12.8,1.7v1.6" stroke="#fff" stroke-width="0.8"/><rect x="2.4" y="1.6" width="11.2" height="0.8" fill="#bfe3ff" opacity="0.6"/></svg>
<div class="tx" style="left:68.7px;top:651px;letter-spacing:0.141px">BBBike Map Compare - Berlin - Berlin Aerial 2005 Infrared Summer</div>
<div class="hdot" style="top:678px;left:36px;width:12px"></div>
<svg class="ic" style="left:48px;top:669px" width="16" height="14" viewBox="0 0 16 14"><rect x="0.5" y="0.5" width="15" height="13" rx="1" fill="#fbfbfb" stroke="#777"/><rect x="2" y="1.6" width="12" height="10.6" fill="url(#sky)"/><path d="M2,12.2 V8.2 L5,6.2 L9,9.4 L11.2,7.6 L14,9.6 V12.2 Z" fill="#5a5d62"/><path d="M9.2,3 a1.8,1.8 0 1 0 1.4,3 a1.3,1.3 0 1 1 -1.4,-3z" fill="#f0f8ff"/><path d="M3.2,4.5h2.4M4.4,3.3v2.4" stroke="#d8f0ff" stroke-width="0.9"/><path d="M12,2.5h1.6M12.8,1.7v1.6" stroke="#fff" stroke-width="0.8"/><rect x="2.4" y="1.6" width="11.2" height="0.8" fill="#bfe3ff" opacity="0.6"/></svg>
<div class="tx" style="left:68.7px;top:669px;letter-spacing:0.088px">BBBike Map Compare - Berlin - Berlin Aerial 2006 B/W</div>
<div class="hdot" style="top:696px;left:36px;width:12px"></div>
<svg class="ic" style="left:48px;top:687px" width="16" height="14" viewBox="0 0 16 14"><rect x="0.5" y="0.5" width="15" height="13" rx="1" fill="#fbfbfb" stroke="#777"/><rect x="2" y="1.6" width="12" height="10.6" fill="url(#sky)"/><path d="M2,12.2 V8.2 L5,6.2 L9,9.4 L11.2,7.6 L14,9.6 V12.2 Z" fill="#5a5d62"/><path d="M9.2,3 a1.8,1.8 0 1 0 1.4,3 a1.3,1.3 0 1 1 -1.4,-3z" fill="#f0f8ff"/><path d="M3.2,4.5h2.4M4.4,3.3v2.4" stroke="#d8f0ff" stroke-width="0.9"/><path d="M12,2.5h1.6M12.8,1.7v1.6" stroke="#fff" stroke-width="0.8"/><rect x="2.4" y="1.6" width="11.2" height="0.8" fill="#bfe3ff" opacity="0.6"/></svg>
<div class="tx" style="left:68.7px;top:687px;letter-spacing:0.085px">BBBike Map Compare - Berlin - Berlin Aerial 2007 Spring</div>
<div class="hdot" style="top:714px;left:36px;width:12px"></div>
<svg class="ic" style="left:48px;top:705px" width="16" height="14" viewBox="0 0 16 14"><rect x="0.5" y="0.5" width="15" height="13" rx="1" fill="#fbfbfb" stroke="#777"/><rect x="2" y="1.6" width="12" height="10.6" fill="url(#sky)"/><path d="M2,12.2 V8.2 L5,6.2 L9,9.4 L11.2,7.6 L14,9.6 V12.2 Z" fill="#5a5d62"/><path d="M9.2,3 a1.8,1.8 0 1 0 1.4,3 a1.3,1.3 0 1 1 -1.4,-3z" fill="#f0f8ff"/><path d="M3.2,4.5h2.4M4.4,3.3v2.4" stroke="#d8f0ff" stroke-width="0.9"/><path d="M12,2.5h1.6M12.8,1.7v1.6" stroke="#fff" stroke-width="0.8"/><rect x="2.4" y="1.6" width="11.2" height="0.8" fill="#bfe3ff" opacity="0.6"/></svg>
<div class="tx" style="left:68.7px;top:705px;letter-spacing:0.098px">BBBike Map Compare - Berlin - Berlin Aerial 2010 Summer</div>
<div class="hdot" style="top:732px;left:36px;width:12px"></div>
<svg class="ic" style="left:48px;top:723px" width="16" height="14" viewBox="0 0 16 14"><rect x="0.5" y="0.5" width="15" height="13" rx="1" fill="#fbfbfb" stroke="#777"/><rect x="2" y="1.6" width="12" height="10.6" fill="url(#sky)"/><path d="M2,12.2 V8.2 L5,6.2 L9,9.4 L11.2,7.6 L14,9.6 V12.2 Z" fill="#5a5d62"/><path d="M9.2,3 a1.8,1.8 0 1 0 1.4,3 a1.3,1.3 0 1 1 -1.4,-3z" fill="#f0f8ff"/><path d="M3.2,4.5h2.4M4.4,3.3v2.4" stroke="#d8f0ff" stroke-width="0.9"/><path d="M12,2.5h1.6M12.8,1.7v1.6" stroke="#fff" stroke-width="0.8"/><rect x="2.4" y="1.6" width="11.2" height="0.8" fill="#bfe3ff" opacity="0.6"/></svg>
<div class="tx hl" style="left:68.7px;top:723px;letter-spacing:0.102px">BBBike Map Compare - Berlin - Berlin Aerial 2011 Spring</div>
<div class="hdot" style="top:750px;left:36px;width:12px"></div>
<svg class="ic" style="left:48px;top:741px" width="16" height="14" viewBox="0 0 16 14"><rect x="0.5" y="0.5" width="15" height="13" rx="1" fill="#fbfbfb" stroke="#777"/><rect x="2" y="1.6" width="12" height="10.6" fill="url(#sky)"/><path d="M2,12.2 V8.2 L5,6.2 L9,9.4 L11.2,7.6 L14,9.6 V12.2 Z" fill="#5a5d62"/><path d="M9.2,3 a1.8,1.8 0 1 0 1.4,3 a1.3,1.3 0 1 1 -1.4,-3z" fill="#f0f8ff"/><path d="M3.2,4.5h2.4M4.4,3.3v2.4" stroke="#d8f0ff" stroke-width="0.9"/><path d="M12,2.5h1.6M12.8,1.7v1.6" stroke="#fff" stroke-width="0.8"/><rect x="2.4" y="1.6" width="11.2" height="0.8" fill="#bfe3ff" opacity="0.6"/></svg>
<div class="tx" style="left:68.7px;top:741px;letter-spacing:0.127px">BBBike Map Compare - Berlin - Berlin Aerial 2013 TrueO. Summer</div>
<div class="hdot" style="top:768px;left:36px;width:12px"></div>
<svg class="ic" style="left:48px;top:759px" width="16" height="14" viewBox="0 0 16 14"><rect x="0.5" y="0.5" width="15" height="13" rx="1" fill="#fbfbfb" stroke="#777"/><rect x="2" y="1.6" width="12" height="10.6" fill="url(#sky)"/><path d="M2,12.2 V8.2 L5,6.2 L9,9.4 L11.2,7.6 L14,9.6 V12.2 Z" fill="#5a5d62"/><path d="M9.2,3 a1.8,1.8 0 1 0 1.4,3 a1.3,1.3 0 1 1 -1.4,-3z" fill="#f0f8ff"/><path d="M3.2,4.5h2.4M4.4,3.3v2.4" stroke="#d8f0ff" stroke-width="0.9"/><path d="M12,2.5h1.6M12.8,1.7v1.6" stroke="#fff" stroke-width="0.8"/><rect x="2.4" y="1.6" width="11.2" height="0.8" fill="#bfe3ff" opacity="0.6"/></svg>
<div class="tx" style="left:68.7px;top:759px;letter-spacing:0.085px">BBBike Map Compare - Berlin - Berlin Aerial 2014 Spring</div>
<div class="hdot" style="top:786px;left:36px;width:12px"></div>
<svg class="ic" style="left:48px;top:777px" width="16" height="14" viewBox="0 0 16 14"><rect x="0.5" y="0.5" width="15" height="13" rx="1" fill="#fbfbfb" stroke="#777"/><rect x="2" y="1.6" width="12" height="10.6" fill="url(#sky)"/><path d="M2,12.2 V8.2 L5,6.2 L9,9.4 L11.2,7.6 L14,9.6 V12.2 Z" fill="#5a5d62"/><path d="M9.2,3 a1.8,1.8 0 1 0 1.4,3 a1.3,1.3 0 1 1 -1.4,-3z" fill="#f0f8ff"/><path d="M3.2,4.5h2.4M4.4,3.3v2.4" stroke="#d8f0ff" stroke-width="0.9"/><path d="M12,2.5h1.6M12.8,1.7v1.6" stroke="#fff" stroke-width="0.8"/><rect x="2.4" y="1.6" width="11.2" height="0.8" fill="#bfe3ff" opacity="0.6"/></svg>
<div class="tx" style="left:68.7px;top:777px;letter-spacing:0.141px">BBBike Map Compare - Berlin - Berlin Aerial 2015 Infrared Summer</div>
<div class="hdot" style="top:804px;left:36px;width:12px"></div>
<svg class="ic" style="left:48px;top:795px" width="16" height="14" viewBox="0 0 16 14"><rect x="0.5" y="0.5" width="15" height="13" rx="1" fill="#fbfbfb" stroke="#777"/><rect x="2" y="1.6" width="12" height="10.6" fill="url(#sky)"/><path d="M2,12.2 V8.2 L5,6.2 L9,9.4 L11.2,7.6 L14,9.6 V12.2 Z" fill="#5a5d62"/><path d="M9.2,3 a1.8,1.8 0 1 0 1.4,3 a1.3,1.3 0 1 1 -1.4,-3z" fill="#f0f8ff"/><path d="M3.2,4.5h2.4M4.4,3.3v2.4" stroke="#d8f0ff" stroke-width="0.9"/><path d="M12,2.5h1.6M12.8,1.7v1.6" stroke="#fff" stroke-width="0.8"/><rect x="2.4" y="1.6" width="11.2" height="0.8" fill="#bfe3ff" opacity="0.6"/></svg>
<div class="tx" style="left:68.7px;top:795px;letter-spacing:0.098px">BBBike Map Compare - Berlin - Berlin Aerial 2015 Summer</div>
<div class="hdot" style="top:822px;left:36px;width:12px"></div>
<svg class="ic" style="left:48px;top:813px" width="16" height="14" viewBox="0 0 16 14"><rect x="0.5" y="0.5" width="15" height="13" rx="1" fill="#fbfbfb" stroke="#777"/><rect x="2" y="1.6" width="12" height="10.6" fill="url(#sky)"/><path d="M2,12.2 V8.2 L5,6.2 L9,9.4 L11.2,7.6 L14,9.6 V12.2 Z" fill="#5a5d62"/><path d="M9.2,3 a1.8,1.8 0 1 0 1.4,3 a1.3,1.3 0 1 1 -1.4,-3z" fill="#f0f8ff"/><path d="M3.2,4.5h2.4M4.4,3.3v2.4" stroke="#d8f0ff" stroke-width="0.9"/><path d="M12,2.5h1.6M12.8,1.7v1.6" stroke="#fff" stroke-width="0.8"/><rect x="2.4" y="1.6" width="11.2" height="0.8" fill="#bfe3ff" opacity="0.6"/></svg>
<div class="tx" style="left:68.7px;top:813px;letter-spacing:0.130px">BBBike Map Compare - Berlin - Berlin Aerial 2016 Infrared Spring</div>
<div class="hdot" style="top:840px;left:36px;width:12px"></div>
<svg class="ic" style="left:48px;top:831px" width="16" height="14" viewBox="0 0 16 14"><rect x="0.5" y="0.5" width="15" height="13" rx="1" fill="#fbfbfb" stroke="#777"/><rect x="2" y="1.6" width="12" height="10.6" fill="url(#sky)"/><path d="M2,12.2 V8.2 L5,6.2 L9,9.4 L11.2,7.6 L14,9.6 V12.2 Z" fill="#5a5d62"/><path d="M9.2,3 a1.8,1.8 0 1 0 1.4,3 a1.3,1.3 0 1 1 -1.4,-3z" fill="#f0f8ff"/><path d="M3.2,4.5h2.4M4.4,3.3v2.4" stroke="#d8f0ff" stroke-width="0.9"/><path d="M12,2.5h1.6M12.8,1.7v1.6" stroke="#fff" stroke-width="0.8"/><rect x="2.4" y="1.6" width="11.2" height="0.8" fill="#bfe3ff" opacity="0.6"/></svg>
<div class="tx" style="left:68.7px;top:831px;letter-spacing:0.085px">BBBike Map Compare - Berlin - Berlin Aerial 2016 Spring</div>
<div class="hdot" style="top:858px;left:36px;width:12px"></div>
<svg class="ic" style="left:48px;top:849px" width="16" height="14" viewBox="0 0 16 14"><rect x="0.5" y="0.5" width="15" height="13" rx="1" fill="#fbfbfb" stroke="#777"/><rect x="2" y="1.6" width="12" height="10.6" fill="url(#sky)"/><path d="M2,12.2 V8.2 L5,6.2 L9,9.4 L11.2,7.6 L14,9.6 V12.2 Z" fill="#5a5d62"/><path d="M9.2,3 a1.8,1.8 0 1 0 1.4,3 a1.3,1.3 0 1 1 -1.4,-3z" fill="#f0f8ff"/><path d="M3.2,4.5h2.4M4.4,3.3v2.4" stroke="#d8f0ff" stroke-width="0.9"/><path d="M12,2.5h1.6M12.8,1.7v1.6" stroke="#fff" stroke-width="0.8"/><rect x="2.4" y="1.6" width="11.2" height="0.8" fill="#bfe3ff" opacity="0.6"/></svg>
<div class="tx" style="left:68.7px;top:849px;letter-spacing:0.085px">BBBike Map Compare - Berlin - Berlin Aerial 2017 Spring</div>
<div class="hdot" style="top:876px;left:36px;width:12px"></div>
<svg class="ic" style="left:48px;top:867px" width="16" height="14" viewBox="0 0 16 14"><rect x="0.5" y="0.5" width="15" height="13" rx="1" fill="#fbfbfb" stroke="#777"/><rect x="2" y="1.6" width="12" height="10.6" fill="url(#sky)"/><path d="M2,12.2 V8.2 L5,6.2 L9,9.4 L11.2,7.6 L14,9.6 V12.2 Z" fill="#5a5d62"/><path d="M9.2,3 a1.8,1.8 0 1 0 1.4,3 a1.3,1.3 0 1 1 -1.4,-3z" fill="#f0f8ff"/><path d="M3.2,4.5h2.4M4.4,3.3v2.4" stroke="#d8f0ff" stroke-width="0.9"/><path d="M12,2.5h1.6M12.8,1.7v1.6" stroke="#fff" stroke-width="0.8"/><rect x="2.4" y="1.6" width="11.2" height="0.8" fill="#bfe3ff" opacity="0.6"/></svg>
<div class="tx" style="left:68.7px;top:867px;letter-spacing:0.085px">BBBike Map Compare - Berlin - Berlin Aerial 2018 Spring</div>
<div class="hdot" style="top:894px;left:36px;width:12px"></div>
<svg class="ic" style="left:48px;top:885px" width="16" height="14" viewBox="0 0 16 14"><rect x="0.5" y="0.5" width="15" height="13" rx="1" fill="#fbfbfb" stroke="#777"/><rect x="2" y="1.6" width="12" height="10.6" fill="url(#sky)"/><path d="M2,12.2 V8.2 L5,6.2 L9,9.4 L11.2,7.6 L14,9.6 V12.2 Z" fill="#5a5d62"/><path d="M9.2,3 a1.8,1.8 0 1 0 1.4,3 a1.3,1.3 0 1 1 -1.4,-3z" fill="#f0f8ff"/><path d="M3.2,4.5h2.4M4.4,3.3v2.4" stroke="#d8f0ff" stroke-width="0.9"/><path d="M12,2.5h1.6M12.8,1.7v1.6" stroke="#fff" stroke-width="0.8"/><rect x="2.4" y="1.6" width="11.2" height="0.8" fill="#bfe3ff" opacity="0.6"/></svg>
<div class="tx" style="left:68.7px;top:885px;letter-spacing:0.085px">BBBike Map Compare - Berlin - Berlin Aerial 2019 Spring</div>
<div class="hdot" style="top:912px;left:36px;width:12px"></div>
<svg class="ic" style="left:48px;top:903px" width="16" height="14" viewBox="0 0 16 14"><rect x="0.5" y="0.5" width="15" height="13" rx="1" fill="#fbfbfb" stroke="#777"/><rect x="2" y="1.6" width="12" height="10.6" fill="url(#sky)"/><path d="M2,12.2 V8.2 L5,6.2 L9,9.4 L11.2,7.6 L14,9.6 V12.2 Z" fill="#5a5d62"/><path d="M9.2,3 a1.8,1.8 0 1 0 1.4,3 a1.3,1.3 0 1 1 -1.4,-3z" fill="#f0f8ff"/><path d="M3.2,4.5h2.4M4.4,3.3v2.4" stroke="#d8f0ff" stroke-width="0.9"/><path d="M12,2.5h1.6M12.8,1.7v1.6" stroke="#fff" stroke-width="0.8"/><rect x="2.4" y="1.6" width="11.2" height="0.8" fill="#bfe3ff" opacity="0.6"/></svg>
<div class="tx" style="left:68.7px;top:903px;letter-spacing:0.135px">BBBike Map Compare - Berlin - Berlin Aerial 2020 Infrared Summer</div>
<div class="hdot" style="top:930px;left:36px;width:12px"></div>
<svg class="ic" style="left:48px;top:921px" width="16" height="14" viewBox="0 0 16 14"><rect x="0.5" y="0.5" width="15" height="13" rx="1" fill="#fbfbfb" stroke="#777"/><rect x="2" y="1.6" width="12" height="10.6" fill="url(#sky)"/><path d="M2,12.2 V8.2 L5,6.2 L9,9.4 L11.2,7.6 L14,9.6 V12.2 Z" fill="#5a5d62"/><path d="M9.2,3 a1.8,1.8 0 1 0 1.4,3 a1.3,1.3 0 1 1 -1.4,-3z" fill="#f0f8ff"/><path d="M3.2,4.5h2.4M4.4,3.3v2.4" stroke="#d8f0ff" stroke-width="0.9"/><path d="M12,2.5h1.6M12.8,1.7v1.6" stroke="#fff" stroke-width="0.8"/><rect x="2.4" y="1.6" width="11.2" height="0.8" fill="#bfe3ff" opacity="0.6"/></svg>
<div class="tx" style="left:68.7px;top:921px;letter-spacing:0.103px">BBBike Map Compare - Berlin - Berlin Aerial 2020 Summer</div>
<div class="hdot" style="top:948px;left:36px;width:12px"></div>
<svg class="ic" style="left:48px;top:939px" width="16" height="14" viewBox="0 0 16 14"><rect x="0.5" y="0.5" width="15" height="13" rx="1" fill="#fbfbfb" stroke="#777"/><rect x="2" y="1.6" width="12" height="10.6" fill="url(#sky)"/><path d="M2,12.2 V8.2 L5,6.2 L9,9.4 L11.2,7.6 L14,9.6 V12.2 Z" fill="#5a5d62"/><path d="M9.2,3 a1.8,1.8 0 1 0 1.4,3 a1.3,1.3 0 1 1 -1.4,-3z" fill="#f0f8ff"/><path d="M3.2,4.5h2.4M4.4,3.3v2.4" stroke="#d8f0ff" stroke-width="0.9"/><path d="M12,2.5h1.6M12.8,1.7v1.6" stroke="#fff" stroke-width="0.8"/><rect x="2.4" y="1.6" width="11.2" height="0.8" fill="#bfe3ff" opacity="0.6"/></svg>
<div class="tx" style="left:68.7px;top:939px;letter-spacing:0.158px">BBBike Map Compare - Berlin - Berlin Aerial 2020 TrueO. Infrared Summer</div>
<div class="hdot" style="top:966px;left:36px;width:12px"></div>
<svg class="ic" style="left:48px;top:957px" width="16" height="14" viewBox="0 0 16 14"><rect x="0.5" y="0.5" width="15" height="13" rx="1" fill="#fbfbfb" stroke="#777"/><rect x="2" y="1.6" width="12" height="10.6" fill="url(#sky)"/><path d="M2,12.2 V8.2 L5,6.2 L9,9.4 L11.2,7.6 L14,9.6 V12.2 Z" fill="#5a5d62"/><path d="M9.2,3 a1.8,1.8 0 1 0 1.4,3 a1.3,1.3 0 1 1 -1.4,-3z" fill="#f0f8ff"/><path d="M3.2,4.5h2.4M4.4,3.3v2.4" stroke="#d8f0ff" stroke-width="0.9"/><path d="M12,2.5h1.6M12.8,1.7v1.6" stroke="#fff" stroke-width="0.8"/><rect x="2.4" y="1.6" width="11.2" height="0.8" fill="#bfe3ff" opacity="0.6"/></svg>
<div class="tx" style="left:68.7px;top:957px;letter-spacing:0.124px">BBBike Map Compare - Berlin - Berlin Aerial 2020 TrueO. Summer</div>
<div class="hdot" style="top:984px;left:36px;width:12px"></div>
<svg class="ic" style="left:48px;top:975px" width="16" height="14" viewBox="0 0 16 14"><rect x="0.5" y="0.5" width="15" height="13" rx="1" fill="#fbfbfb" stroke="#777"/><rect x="2" y="1.6" width="12" height="10.6" fill="url(#sky)"/><path d="M2,12.2 V8.2 L5,6.2 L9,9.4 L11.2,7.6 L14,9.6 V12.2 Z" fill="#5a5d62"/><path d="M9.2,3 a1.8,1.8 0 1 0 1.4,3 a1.3,1.3 0 1 1 -1.4,-3z" fill="#f0f8ff"/><path d="M3.2,4.5h2.4M4.4,3.3v2.4" stroke="#d8f0ff" stroke-width="0.9"/><path d="M12,2.5h1.6M12.8,1.7v1.6" stroke="#fff" stroke-width="0.8"/><rect x="2.4" y="1.6" width="11.2" height="0.8" fill="#bfe3ff" opacity="0.6"/></svg>
<div class="tx" style="left:68.7px;top:975px;letter-spacing:0.085px">BBBike Map Compare - Berlin - Berlin Aerial 2021 Spring</div>
<div class="hdot" style="top:1002px;left:36px;width:12px"></div>
<svg class="ic" style="left:48px;top:993px" width="16" height="14" viewBox="0 0 16 14"><rect x="0.5" y="0.5" width="15" height="13" rx="1" fill="#fbfbfb" stroke="#777"/><rect x="2" y="1.6" width="12" height="10.6" fill="url(#sky)"/><path d="M2,12.2 V8.2 L5,6.2 L9,9.4 L11.2,7.6 L14,9.6 V12.2 Z" fill="#5a5d62"/><path d="M9.2,3 a1.8,1.8 0 1 0 1.4,3 a1.3,1.3 0 1 1 -1.4,-3z" fill="#f0f8ff"/><path d="M3.2,4.5h2.4M4.4,3.3v2.4" stroke="#d8f0ff" stroke-width="0.9"/><path d="M12,2.5h1.6M12.8,1.7v1.6" stroke="#fff" stroke-width="0.8"/><rect x="2.4" y="1.6" width="11.2" height="0.8" fill="#bfe3ff" opacity="0.6"/></svg>
<div class="tx" style="left:68.7px;top:993px;letter-spacing:0.124px">BBBike Map Compare - Berlin - Berlin Aerial 2022 TrueO. Summer</div>
</div>
<div id="right"></div>
<div id="tb">
  <svg class="a" style="left:11px;top:6px" width="17" height="17" viewBox="0 0 17 17"><circle cx="6.5" cy="6.5" r="5" fill="none" stroke="#14145a" stroke-width="1.6"/><path d="M10 10l5.5 5.5" stroke="#14145a" stroke-width="2.2"/><path d="M4 6.5h5M6.5 4v5" stroke="#14145a" stroke-width="1.6"/></svg>
  <div class="tbt" style="left:32px;top:8px">Zoom in</div>
  <div class="tbt" style="left:118px;top:8px;color:#a0a0a0">Zoom out</div>
  <div class="a" style="left:183px;top:3px;width:1px;height:22px;background:#a0a0a0"></div>
  <div class="a" style="left:185px;top:3px;width:1px;height:22px;background:#fff"></div>
  <div class="a" style="left:188px;top:3px;width:90px;height:23px;background:#f8f8f8;border-top:1px solid #a0a0a0;border-left:1px solid #a0a0a0"></div>
  <svg class="a" style="left:201px;top:9px" width="13" height="14" viewBox="0 0 13 14"><path d="M4,13.5 C3,12 1,9.5 1,8.6 C1,7.8 2,7.6 2.8,8.4 L3.5,9.2 V3 C3.5,2.2 4.9,2.2 4.9,3 V1.8 C4.9,1 6.3,1 6.3,1.8 V2.2 C6.3,1.5 7.7,1.5 7.7,2.2 V3 C7.7,2.3 9.1,2.3 9.1,3 V9.5 C9.1,11 8.6,12.5 8,13.5 Z" fill="#fff" stroke="#333" stroke-width="0.8"/><path d="M4.9,3V6.5 M6.3,2.2V6.5 M7.7,3V6.5" stroke="#333" stroke-width="0.7"/></svg>
  <div class="tbt" style="left:219px;top:9px">Pan map</div>
  <svg class="a" style="left:286px;top:8px" width="15" height="15" viewBox="0 0 15 15"><rect x="0.7" y="0.7" width="13.6" height="13.6" rx="2.5" fill="none" stroke="#222" stroke-width="1.2" stroke-dasharray="3.2 2.2" stroke-dashoffset="1.5"/></svg>
  <div class="tbt" style="left:305px;top:8px">Rectangle</div>
  <div class="a" style="left:376px;top:3px;width:280px;height:23px;background:#fff"></div>
  <svg class="a" style="left:664px;top:6px" width="14" height="16" viewBox="0 0 14 16"><path d="M7 1v10M3 7.5l4 4 4-4M1 11v3.5h12V11" fill="none" stroke="#333" stroke-width="1.1"/></svg>
  <div class="tbt" style="left:683px;top:8px">Download</div>
</div>
<div id="mapwrap" class="a" style="left:0;top:0;width:1920px;height:1032px;pointer-events:none">
<svg width="1920" height="1032" style="position:absolute;left:0;top:0">
<defs>
<clipPath id="clip"><polygon points="790.0,480.0 790.5,390.0 797.5,308.7 803.0,303.0 820.8,291.0 848.0,277.7 873.0,268.0 888.6,258.0 935.0,212.6 944.8,212.6 964.0,200.0 975.8,194.0 991.0,180.8 1024.0,134.0 1084.0,134.0 1096.0,167.0 1119.0,168.0 1123.0,176.0 1162.0,176.0 1164.0,170.0 1200.6,161.0 1250.0,159.5 1257.0,163.0 1272.0,130.0 1293.0,107.0 1318.0,94.7 1335.7,94.7 1349.0,130.0 1370.5,151.7 1392.0,163.0 1399.6,184.7 1401.5,254.0 1395.7,256.0 1395.7,264.0 1413.0,264.0 1432.6,304.8 1440.0,306.7 1471.0,332.0 1477.0,347.4 1494.6,382.0 1506.0,384.0 1521.7,396.0 1541.0,403.6 1552.7,405.6 1564.0,419.0 1564.0,432.7 1576.0,432.7 1589.5,448.0 1597.0,480.0 1604.7,488.0 1604.7,520.5 1586.0,520.5 1586.0,550.7 1609.0,550.7 1609.0,557.7 1637.0,560.0 1637.0,571.6 1646.5,574.0 1725.6,632.0 1741.9,664.7 1741.9,692.6 1704.7,767.0 1660.0,827.4 1581.0,929.8 1562.8,929.8 1529.0,869.5 1528.4,857.8 1522.6,562.5 1480.7,563.3 1485.7,826.8 1441.9,815.8 1409.0,808.8 1390.7,799.5 1372.0,785.6 1325.6,790.0 1281.0,806.5 1260.5,808.8 1251.0,829.8 1191.0,830.0 1189.0,799.0 1163.8,797.0 1163.8,775.9 1121.0,746.8 1082.4,772.0 1072.7,758.4 968.0,758.4 944.8,753.4 898.0,758.4 884.7,781.7 884.7,791.4 843.0,791.4 843.0,801.0 801.4,801.0 799.5,766.0 780.0,750.7 743.0,750.7 733.6,735.0 739.4,712.0 774.0,579.4 793.6,578.0"/></clipPath>
<filter id="b1" x="-20%" y="-20%" width="140%" height="140%"><feGaussianBlur stdDeviation="1.2"/></filter>
<filter id="b2" x="-20%" y="-20%" width="140%" height="140%"><feGaussianBlur stdDeviation="4"/></filter>
<filter id="b3" x="-30%" y="-30%" width="160%" height="160%"><feGaussianBlur stdDeviation="14"/></filter>
<filter id="nz1" x="0" y="0" width="100%" height="100%"><feTurbulence type="fractalNoise" baseFrequency="0.3" numOctaves="2" seed="7"/><feColorMatrix type="matrix" values="0 0 0 0 1  0 0 0 0 1  0 0 0 0 1  3.4 0 0 0 -1.85"/></filter>
<filter id="nz2" x="0" y="0" width="100%" height="100%"><feTurbulence type="fractalNoise" baseFrequency="0.28" numOctaves="2" seed="19"/><feColorMatrix type="matrix" values="0 0 0 0 0  0 0 0 0 0  0 0 0 0 0  3.4 0 0 0 -1.8"/></filter>
<filter id="nz3" x="0" y="0" width="100%" height="100%"><feTurbulence type="fractalNoise" baseFrequency="0.04" numOctaves="2" seed="5"/><feColorMatrix type="matrix" values="0 0 0 0 0.35  0 0 0 0 0.33  0 0 0 0 0.28  2 0 0 0 -0.9"/></filter>
<filter id="nz4" x="0" y="0" width="100%" height="100%"><feTurbulence type="fractalNoise" baseFrequency="0.12" numOctaves="2" seed="11"/><feColorMatrix type="matrix" values="0 0 0 0 0.15  0 0 0 0 0.15  0 0 0 0 0.13  2.6 0 0 0 -1.25"/></filter>
</defs>
<g clip-path="url(#clip)">
<rect x="720" y="90" width="1030" height="845" fill="#5f6261"/>
<rect x="720" y="90" width="1030" height="845" filter="url(#nz3)" opacity="0.5"/>
<ellipse cx="1175.0" cy="505.0" rx="90.0" ry="55.0" fill="#7e807e" opacity="0.60" transform="rotate(0 1175.0 505.0)" filter="url(#b3)"/>
<ellipse cx="1260.0" cy="460.0" rx="60.0" ry="45.0" fill="#747676" opacity="0.45" transform="rotate(0 1260.0 460.0)" filter="url(#b3)"/>
<ellipse cx="1370.0" cy="440.0" rx="80.0" ry="60.0" fill="#6e7070" opacity="0.45" transform="rotate(0 1370.0 440.0)" filter="url(#b3)"/>
<ellipse cx="1120.0" cy="320.0" rx="50.0" ry="50.0" fill="#6e7070" opacity="0.35" transform="rotate(0 1120.0 320.0)" filter="url(#b3)"/>
<ellipse cx="1560.0" cy="480.0" rx="40.0" ry="40.0" fill="#75726a" opacity="0.50" transform="rotate(0 1560.0 480.0)" filter="url(#b3)"/>
<polygon points="1021.8,134.0 1084.0,134.0 1096.0,167.0 1080.0,194.0 1040.0,194.0 1040.0,140.0" fill="#5e5b52" opacity="0.95" filter="url(#b1)"/>
<polygon points="991.6,183.0 1006.7,160.3 1021.8,136.0 1038.0,145.0 1039.4,190.5 1021.8,193.0" fill="#b6ab93" opacity="1.00" filter="url(#b1)"/>
<polygon points="974.0,195.6 1011.7,190.5 1040.0,192.0 1047.0,225.8 1011.7,223.3 976.5,223.3" fill="#4e4c43" opacity="0.95" filter="url(#b1)"/>
<polygon points="981.5,220.8 1047.0,225.8 1060.0,250.0 1047.0,281.2 1031.9,296.3 1006.7,311.4 986.5,296.3 981.5,258.5" fill="#56514a" opacity="0.95" filter="url(#b1)"/>
<polygon points="946.0,215.0 982.0,215.0 982.0,311.0 946.0,311.0" fill="#6c6b64" opacity="0.90" filter="url(#b1)"/>
<polygon points="951.0,256.0 962.0,256.0 962.0,270.0 951.0,270.0" fill="#a0967f" opacity="0.80" filter="url(#b1)"/>
<polygon points="960.0,276.0 972.0,276.0 972.0,292.0 960.0,292.0" fill="#a0967f" opacity="0.80" filter="url(#b1)"/>
<polygon points="888.0,258.0 935.0,212.6 944.8,212.6 941.0,261.0 900.0,268.0" fill="#7a7568" opacity="0.90" filter="url(#b1)"/>
<polygon points="870.7,256.0 911.0,256.0 911.0,281.0 870.7,281.0" fill="#a0967f" opacity="0.70" filter="url(#b1)"/>
<polygon points="800.0,303.0 848.0,277.7 873.0,268.0 888.6,258.0 868.0,300.0 840.0,320.0 805.0,336.0" fill="#857e6e" opacity="0.90" filter="url(#b1)"/>
<polygon points="843.0,300.0 931.0,291.0 935.0,340.0 931.0,380.0 880.0,380.0 843.0,360.0 825.0,340.0" fill="#555046" opacity="0.90" filter="url(#b1)"/>
<polygon points="860.0,300.0 882.0,300.0 882.0,318.0 860.0,318.0" fill="#8c8470" opacity="0.60" filter="url(#b1)"/>
<polygon points="815.0,300.0 840.0,300.0 840.0,325.0 815.0,325.0" fill="#8a8270" opacity="0.50" filter="url(#b1)"/>
<polygon points="903.0,341.7 921.0,341.7 921.0,356.7 903.0,356.7" fill="#a0967f" opacity="0.70" filter="url(#b1)"/>
<ellipse cx="855.0" cy="318.0" rx="10.0" ry="7.0" fill="#a0967f" opacity="0.50" transform="rotate(0 855.0 318.0)" filter="url(#b1)"/>
<polygon points="790.0,336.0 843.0,330.0 836.7,420.0 830.0,470.0 790.0,470.0" fill="#7c766a" opacity="0.80" filter="url(#b1)"/>
<polygon points="800.0,346.7 817.8,346.7 815.0,372.0 800.0,372.0" fill="#98aaae" opacity="0.70" filter="url(#b1)"/>
<polygon points="921.0,220.8 948.8,220.8 945.0,260.0 935.0,300.0 948.0,336.6 930.0,336.6 918.0,300.0 915.0,260.0" fill="#98aaae" opacity="0.85" filter="url(#b1)"/>
<path d="M941,214 C935,240 922,262 921,266 C925,278 930,292 941.2,306.4 C944,318 943,326 943.7,334 C948,346 952,354 953.8,359.3 C956,368 958,374 954.7,380 C952,392 947,410 940.7,426 C935,435 930,440 926.6,443" fill="none" stroke="#2e383c" stroke-width="3.0" opacity="0.90" stroke-linejoin="round" stroke-linecap="round"/>
<polygon points="935.0,370.0 954.7,370.0 952.0,400.0 945.0,429.0 935.0,429.0" fill="#98aaae" opacity="0.60" filter="url(#b1)"/>
<polygon points="970.0,371.7 986.7,330.0 1011.7,309.0 1028.0,313.0 1030.4,330.0 1020.0,355.0 995.0,380.0 974.0,388.0 966.0,380.0" fill="#98aaae" opacity="0.95" filter="url(#b1)"/>
<ellipse cx="1003.0" cy="335.0" rx="4.0" ry="3.0" fill="#2e383c" opacity="0.60" transform="rotate(0 1003.0 335.0)" filter="url(#b1)"/>
<ellipse cx="996.0" cy="343.0" rx="5.0" ry="2.5" fill="#2e383c" opacity="0.60" transform="rotate(0 996.0 343.0)" filter="url(#b1)"/>
<ellipse cx="1042.0" cy="365.0" rx="6.0" ry="5.0" fill="#98aaae" opacity="0.60" transform="rotate(0 1042.0 365.0)" filter="url(#b1)"/>
<polygon points="1032.0,276.0 1080.0,276.0 1080.0,380.0 1032.0,380.0" fill="#727472" opacity="0.70" filter="url(#b2)"/>
<polygon points="994.0,346.7 1032.0,346.7 1032.0,380.0 994.0,380.0" fill="#554f44" opacity="0.70" filter="url(#b2)"/>
<polygon points="995.0,392.5 1090.8,367.5 1097.0,378.0 1011.7,403.0" fill="#b8ae98" opacity="0.90" filter="url(#b1)"/>
<polygon points="1030.0,395.0 1058.0,388.0 1062.0,402.0 1034.0,409.0" fill="#a9a596" opacity="0.60" filter="url(#b1)"/>
<polygon points="1022.0,412.0 1061.0,412.0 1061.0,432.0 1022.0,432.0" fill="#6e6250" opacity="0.70" filter="url(#b1)"/>
<ellipse cx="888.0" cy="392.0" rx="12.0" ry="11.0" fill="#4e4c43" opacity="0.70" transform="rotate(0 888.0 392.0)" filter="url(#b1)"/>
<polygon points="1080.0,135.0 1119.0,168.0 1123.0,185.5 1080.0,185.5" fill="#5a5850" opacity="0.70" filter="url(#b1)"/>
<polygon points="1119.0,168.7 1198.0,160.0 1212.0,202.0 1226.0,236.0 1226.0,281.0 1200.8,281.0 1172.7,269.8 1136.0,258.5 1116.5,247.3 1102.5,219.0 1122.0,188.0" fill="#847c6a" opacity="0.90" filter="url(#b1)"/>
<ellipse cx="1160.0" cy="215.0" rx="20.0" ry="12.0" fill="#5a564c" opacity="0.60" transform="rotate(0 1160.0 215.0)" filter="url(#b1)"/>
<ellipse cx="1195.0" cy="240.0" rx="10.0" ry="14.0" fill="#5a564c" opacity="0.50" transform="rotate(0 1195.0 240.0)" filter="url(#b1)"/>
<ellipse cx="1135.0" cy="190.0" rx="12.0" ry="10.0" fill="#55524a" opacity="0.60" transform="rotate(0 1135.0 190.0)" filter="url(#b1)"/>
<ellipse cx="1240.0" cy="200.0" rx="12.0" ry="9.0" fill="#6a665c" opacity="0.50" transform="rotate(0 1240.0 200.0)" filter="url(#b1)"/>
<ellipse cx="1215.0" cy="262.0" rx="12.0" ry="10.0" fill="#5e5c54" opacity="0.50" transform="rotate(0 1215.0 262.0)" filter="url(#b1)"/>
<ellipse cx="1175.0" cy="175.0" rx="8.0" ry="6.0" fill="#5e5c54" opacity="0.50" transform="rotate(0 1175.0 175.0)" filter="url(#b1)"/>
<polygon points="1260.0,175.0 1285.0,175.0 1285.0,187.0 1260.0,187.0" fill="#6a665a" opacity="0.45" filter="url(#b1)"/>
<polygon points="1380.0,285.0 1405.0,285.0 1405.0,310.0 1380.0,310.0" fill="#6e6a60" opacity="0.45" filter="url(#b1)"/>
<polygon points="1420.0,320.0 1438.0,320.0 1438.0,342.0 1420.0,342.0" fill="#6e6a60" opacity="0.40" filter="url(#b1)"/>
<polygon points="1198.0,160.0 1257.0,160.0 1237.0,183.0 1254.0,202.0 1302.0,208.0 1293.5,230.0 1310.0,247.0 1282.0,258.5 1260.0,247.0 1237.0,230.0 1215.0,219.0 1198.0,197.0" fill="#948a76" opacity="0.90" filter="url(#b1)"/>
<polygon points="1257.0,163.0 1271.0,132.0 1299.0,104.0 1333.0,94.0 1350.0,132.0 1372.0,152.0 1321.6,152.0 1310.3,174.0 1302.0,208.0 1293.5,230.4 1276.6,213.6 1254.0,202.0 1237.3,182.7 1226.0,163.0" fill="#aca189" opacity="0.95" filter="url(#b1)"/>
<polygon points="1304.7,154.6 1349.7,151.8 1355.3,174.3 1332.8,196.7 1316.0,208.0 1304.7,202.4" fill="#4e4c43" opacity="0.95" filter="url(#b1)"/>
<polygon points="1349.7,154.6 1391.8,165.8 1398.8,182.7 1398.8,224.8 1372.0,230.4 1349.7,202.4" fill="#5a5a52" opacity="0.90" filter="url(#b1)"/>
<polygon points="1295.0,199.0 1343.0,199.0 1343.0,232.0 1295.0,232.0" fill="#a69c84" opacity="0.80" filter="url(#b1)"/>
<polygon points="1286.0,229.0 1360.0,229.0 1360.0,275.0 1286.0,275.0" fill="#5c5c56" opacity="0.80" filter="url(#b1)"/>
<polygon points="1349.7,241.7 1400.0,219.0 1401.0,264.0 1420.0,264.0 1433.0,304.8 1474.0,338.0 1445.0,352.7 1416.0,367.0 1387.0,352.7 1358.0,338.0 1329.0,332.0 1310.3,309.0 1327.0,286.6 1349.7,258.5" fill="#a0967f" opacity="0.90" filter="url(#b1)"/>
<polygon points="1276.0,315.0 1305.0,315.0 1305.0,343.0 1276.0,343.0" fill="#a0967f" opacity="0.60" filter="url(#b1)"/>
<polygon points="1477.0,347.4 1494.6,382.0 1506.0,384.0 1521.7,396.0 1541.0,403.6 1552.7,405.6 1561.0,425.0 1489.0,425.0" fill="#b6ab93" opacity="0.85" filter="url(#b1)"/>
<polygon points="1343.6,352.7 1488.6,352.7 1488.6,497.7 1343.6,497.7" fill="#6e6e6a" opacity="0.60" filter="url(#b2)"/>
<polygon points="1480.0,425.0 1561.0,425.0 1589.5,448.0 1602.0,518.0 1480.0,518.0" fill="#77736a" opacity="0.85" filter="url(#b2)"/>
<polygon points="1480.0,512.6 1561.6,512.6 1561.6,541.6 1480.0,541.6" fill="#847c6a" opacity="0.60" filter="url(#b1)"/>
<polygon points="1532.0,536.0 1590.0,536.0 1586.0,560.0 1532.0,562.0" fill="#4e4c43" opacity="0.70" filter="url(#b1)"/>
<polygon points="1586.0,550.7 1609.0,550.7 1609.0,557.7 1637.0,560.0 1637.0,572.0 1590.0,572.0" fill="#a0967f" opacity="0.70" filter="url(#b1)"/>
<polygon points="791.8,476.7 836.0,474.9 893.0,500.0 893.0,583.5 851.8,575.7 828.5,556.3 793.6,572.0" fill="#a0967f" opacity="0.90" filter="url(#b1)"/>
<polygon points="814.0,533.0 848.0,533.0 848.0,583.0 814.0,583.0" fill="#4e4c43" opacity="0.80" filter="url(#b1)"/>
<polygon points="805.0,466.0 827.0,466.0 827.0,488.0 805.0,488.0" fill="#4e4c43" opacity="0.60" filter="url(#b1)"/>
<polygon points="808.0,502.0 826.0,502.0 826.0,527.0 808.0,527.0" fill="#4e4c43" opacity="0.60" filter="url(#b1)"/>
<polygon points="805.0,578.0 870.0,578.0 885.0,600.0 870.0,640.0 830.0,660.0 800.0,655.0" fill="#5e5a50" opacity="0.70" filter="url(#b1)"/>
<polygon points="805.0,580.0 895.0,580.0 895.0,625.0 860.0,630.0 830.0,610.0" fill="#8c8472" opacity="0.50" filter="url(#b1)"/>
<polygon points="876.0,381.0 898.0,381.0 898.0,404.0 876.0,404.0" fill="#4e4c43" opacity="0.70" filter="url(#b1)"/>
<polygon points="912.6,527.0 1000.0,527.0 1011.0,560.0 1011.0,610.0 975.8,641.6 944.8,657.0 912.6,660.0 905.0,600.0" fill="#454740" opacity="0.95" filter="url(#b1)"/>
<path d="M1000,532 L932,660" fill="none" stroke="#8a8478" stroke-width="1.5" opacity="0.50" stroke-linejoin="round" stroke-linecap="round"/>
<polygon points="762.0,710.8 898.0,690.0 921.5,711.3 898.3,757.8 886.7,788.8 844.0,792.7 801.4,804.3 797.5,757.8 770.4,742.3" fill="#5c5448" opacity="0.95" filter="url(#b1)"/>
<polygon points="797.0,750.0 811.0,750.0 811.0,764.0 797.0,764.0" fill="#a0967f" opacity="0.60" filter="url(#b1)"/>
<polygon points="884.0,650.6 917.7,650.6 917.7,687.8 884.0,687.8" fill="#4e4c43" opacity="0.85" filter="url(#b1)"/>
<polygon points="792.8,705.3 805.0,676.3 826.7,666.6 860.7,659.3 880.0,647.2 905.0,627.8 905.0,652.0 884.9,657.0 880.0,671.4 884.9,690.8 892.0,705.3 880.0,715.0 870.3,710.2 860.7,686.0 841.3,673.9 826.7,686.0 809.8,695.7 797.7,707.8" fill="#98aaae" opacity="0.95" filter="url(#b1)"/>
<polygon points="842.0,676.0 862.0,668.0 878.0,680.0 882.5,700.0 872.0,715.0 850.0,712.0 836.0,700.0" fill="#4e4c40" opacity="0.90" filter="url(#b1)"/>
<polygon points="783.0,591.5 799.0,593.0 797.7,612.0 790.0,628.0 781.0,626.0" fill="#98aaae" opacity="0.85" filter="url(#b1)"/>
<polygon points="770.0,642.0 783.0,645.0 780.0,670.0 770.0,690.0 756.0,698.0 754.0,680.0 762.0,660.0" fill="#98aaae" opacity="0.85" filter="url(#b1)"/>
<polygon points="898.5,499.0 912.6,499.0 912.6,521.7 898.5,521.7" fill="#98aaae" opacity="0.80" filter="url(#b1)"/>
<polygon points="926.6,499.0 938.0,499.0 938.0,527.0 926.6,527.0" fill="#98aaae" opacity="0.80" filter="url(#b1)"/>
<path d="M916.0,676.0 C918.3,674.7 925.2,670.3 930.0,668.0 C934.8,665.7 941.2,663.3 945.0,662.0 C948.8,660.7 951.7,660.3 953.0,660.0" fill="none" stroke="#3e4a50" stroke-width="4.0" opacity="0.80" stroke-linejoin="round" stroke-linecap="round"/>
<polygon points="895.7,527.3 909.8,517.5 926.6,523.0 915.4,535.7 909.8,561.0 912.6,594.7 905.0,622.0 900.0,632.0 880.0,648.0 858.0,658.0 838.0,665.0 815.0,673.0 802.0,684.0 790.0,700.0 775.0,712.0 768.0,735.0 752.0,738.0 740.0,728.0 742.0,712.0 768.0,705.0 780.0,694.0 790.0,680.0 805.0,668.0 825.0,660.0 850.0,652.0 872.0,641.0 886.0,632.0 895.7,611.6 898.5,589.0 892.9,552.6" fill="#2e383c" opacity="0.95"/>
<path d="M756.6,739.2 C765,745 772,748 779.6,749.8 C788,756 792,760 797.3,764 C802,768 806,772 809.7,774.6 C816,770 822,766 829,762.2" fill="none" stroke="#2e383c" stroke-width="4.0" opacity="0.80" stroke-linejoin="round" stroke-linecap="round"/>
<path d="M944.8,757.8 C952.2,757.5 974.8,756.5 989.0,755.8 C1003.2,755.1 1019.0,758.9 1030.0,753.8 C1041.0,748.7 1047.3,734.0 1055.0,725.0 C1062.7,716.0 1068.2,709.5 1076.0,699.5 C1083.8,689.5 1090.8,673.3 1101.5,664.7 C1112.2,656.1 1126.4,653.2 1140.0,648.0 C1153.6,642.8 1173.0,636.0 1183.0,633.7 C1193.0,631.4 1192.4,634.9 1200.0,634.0 C1207.6,633.1 1219.1,628.9 1228.5,628.4 C1237.9,627.9 1246.3,632.1 1256.6,631.2 C1266.9,630.3 1284.7,624.2 1290.3,622.8" fill="none" stroke="#2e383c" stroke-width="2.0" opacity="0.65" stroke-linejoin="round" stroke-linecap="round"/>
<path d="M926.6,441.6 C935,442 940,443 943.5,443 C955,444 962,445 968.8,445.8 C975,450 978,455 982.8,457 C990,459 1000,460 1011,460 C1020,458 1030,456 1039,454.3 C1050,452 1060,450 1070,448.7" fill="none" stroke="#2e383c" stroke-width="2.5" opacity="0.85" stroke-linejoin="round" stroke-linecap="round"/>
<path d="M1040.0,456.7 C1045.0,454.9 1059.0,449.8 1070.0,446.0 C1081.0,442.2 1094.7,435.7 1106.3,434.0 C1117.9,432.3 1131.6,434.9 1139.4,435.8 C1147.2,436.7 1149.5,437.0 1153.3,439.3 C1157.1,441.6 1159.7,445.4 1162.0,449.7 C1164.3,454.0 1165.5,461.9 1167.3,465.4 C1169.0,468.9 1171.6,469.8 1172.5,470.7" fill="none" stroke="#2e383c" stroke-width="2.0" opacity="0.70" stroke-linejoin="round" stroke-linecap="round"/>
<path d="M1040.0,456.7 C1042.9,457.0 1053.3,455.6 1057.4,458.5 C1061.5,461.4 1059.8,470.5 1064.4,474.0 C1069.1,477.5 1080.7,479.9 1085.3,479.4 C1089.9,478.8 1088.8,471.6 1092.3,470.7 C1095.8,469.8 1102.8,471.4 1106.3,474.0 C1109.8,476.6 1110.6,486.1 1113.2,486.4 C1115.8,486.7 1117.9,476.6 1122.0,476.0 C1126.1,475.4 1132.7,481.5 1137.6,482.9 C1142.5,484.3 1147.5,485.9 1151.6,484.6 C1155.7,483.3 1158.5,475.9 1162.0,475.0 C1165.5,474.1 1168.4,478.4 1172.5,479.4 C1176.6,480.4 1182.4,481.7 1186.5,481.0 C1190.6,480.3 1192.9,475.0 1197.0,475.0 C1201.1,475.0 1206.4,478.5 1211.0,481.0 C1215.6,483.5 1220.0,486.9 1224.8,489.8 C1229.6,492.7 1233.8,494.2 1240.0,498.6 C1246.2,503.0 1254.5,510.8 1262.0,516.0 C1269.5,521.2 1277.5,525.8 1285.0,530.0 C1292.5,534.2 1299.5,536.8 1307.0,541.0 C1314.5,545.2 1326.2,552.7 1330.0,555.0" fill="none" stroke="#2e383c" stroke-width="2.6" opacity="0.85" stroke-linejoin="round" stroke-linecap="round"/>
<path d="M1272.0,521.0 C1277.0,524.5 1292.0,537.0 1302.0,542.0 C1312.0,547.0 1324.8,546.7 1332.0,551.0 C1339.2,555.3 1342.2,560.8 1345.0,568.0 C1347.8,575.2 1348.3,589.7 1349.0,594.0" fill="none" stroke="#2e383c" stroke-width="6.0" opacity="0.85" stroke-linejoin="round" stroke-linecap="round"/>
<path d="M1330.0,555.0 C1332.5,556.2 1341.7,558.3 1344.7,562.0 C1347.7,565.7 1347.1,571.9 1348.0,577.4 C1348.9,582.9 1348.2,589.5 1350.0,595.0 C1351.8,600.5 1354.8,606.0 1358.6,610.6 C1362.4,615.2 1367.9,619.0 1372.6,622.8 C1377.2,626.6 1382.4,630.5 1386.5,633.3 C1390.6,636.1 1393.5,639.1 1397.0,639.4 C1400.5,639.7 1403.3,636.3 1407.4,635.0 C1411.5,633.7 1416.7,631.5 1421.4,631.5 C1426.1,631.5 1430.8,633.5 1435.4,635.0 C1440.1,636.5 1445.5,637.9 1449.3,640.2 C1453.1,642.5 1456.0,646.1 1458.0,649.0 C1460.0,651.9 1461.2,654.5 1461.5,657.7 C1461.8,660.9 1459.5,664.0 1459.8,668.0 C1460.1,672.0 1461.5,676.8 1463.3,682.0 C1465.0,687.2 1468.0,693.7 1470.3,699.5 C1472.6,705.3 1475.4,711.2 1477.2,717.0 C1479.0,722.8 1480.4,731.5 1481.0,734.4" fill="none" stroke="#2e383c" stroke-width="4.5" opacity="0.90" stroke-linejoin="round" stroke-linecap="round"/>
<path d="M1288.8,624.5 C1290.8,627.7 1296.0,637.6 1301.0,643.7 C1306.0,649.8 1312.4,655.4 1318.5,661.2 C1324.6,667.0 1330.5,672.8 1337.7,678.6 C1345.0,684.4 1354.5,691.9 1362.0,696.0 C1369.5,700.1 1374.3,701.2 1383.0,703.0 C1391.7,704.8 1401.6,707.1 1414.4,706.5 C1427.2,705.9 1452.2,700.7 1459.8,699.5" fill="none" stroke="#3a4044" stroke-width="1.8" opacity="0.70" stroke-linejoin="round" stroke-linecap="round"/>
<path d="M1240.0,631.5 C1242.9,630.9 1249.6,629.2 1257.4,628.0 C1265.2,626.8 1276.8,624.8 1287.0,624.5 C1297.2,624.2 1313.2,626.0 1318.5,626.3" fill="none" stroke="#3a4044" stroke-width="1.8" opacity="0.60" stroke-linejoin="round" stroke-linecap="round"/>
<polygon points="1325.5,626.0 1355.5,626.0 1355.5,651.0 1325.5,651.0" fill="#45493e" opacity="0.80" filter="url(#b1)"/>
<polygon points="1327.0,560.0 1348.0,560.0 1348.0,600.0 1327.0,600.0" fill="#5a5248" opacity="0.70" filter="url(#b1)"/>
<polygon points="1432.0,703.0 1458.0,703.0 1458.0,734.0 1432.0,734.0" fill="#4a4d44" opacity="0.70" filter="url(#b1)"/>
<polygon points="1432.0,574.0 1480.0,574.0 1480.0,630.0 1432.0,630.0" fill="#5a564c" opacity="0.50" filter="url(#b2)"/>
<polygon points="1386.5,581.0 1414.5,581.0 1414.5,609.0 1386.5,609.0" fill="#a09888" opacity="0.60" filter="url(#b1)"/>
<polygon points="1240.0,590.0 1298.0,590.0 1298.0,646.0 1240.0,646.0" fill="#7c8082" opacity="0.45" filter="url(#b2)"/>
<path d="M1110.0,488.0 C1115.8,490.9 1135.9,501.1 1144.6,505.5 C1153.3,509.9 1153.9,511.1 1162.0,514.3 C1170.1,517.5 1180.4,520.9 1193.4,524.7 C1206.4,528.5 1228.6,532.8 1240.0,537.0 C1251.4,541.2 1258.3,547.8 1262.0,550.0" fill="none" stroke="#2e383c" stroke-width="1.3" opacity="0.60" stroke-linejoin="round" stroke-linecap="round"/>
<polygon points="1115.0,486.0 1176.0,484.0 1176.0,505.0 1115.0,505.0" fill="#545448" opacity="0.75" filter="url(#b2)"/>
<polygon points="1082.0,437.5 1110.0,437.5 1110.0,452.5 1082.0,452.5" fill="#a0a4a4" opacity="0.50" filter="url(#b1)"/>
<polygon points="1040.0,390.0 1066.0,390.0 1066.0,408.0 1040.0,408.0" fill="#b0aea0" opacity="0.50" filter="url(#b1)"/>
<polygon points="1290.0,412.0 1341.0,412.0 1341.0,440.0 1290.0,440.0" fill="#5a5448" opacity="0.60" filter="url(#b2)"/>
<polygon points="1330.0,544.0 1355.0,544.0 1355.0,595.0 1330.0,595.0" fill="#5a5248" opacity="0.70" filter="url(#b2)"/>
<polygon points="1363.0,398.0 1400.0,398.0 1400.0,496.0 1363.0,496.0" fill="#7c7e7c" opacity="0.50" filter="url(#b2)"/>
<ellipse cx="1212.8" cy="589.0" rx="24.0" ry="20.2" fill="#b0a58b" opacity="0.95" transform="rotate(0 1212.8 589.0)" filter="url(#b1)"/>
<polygon points="1241.0,740.8 1266.2,727.0 1289.0,718.0 1307.5,718.0 1316.6,759.0 1335.0,773.0 1380.8,768.3 1390.0,786.7 1335.0,786.7 1316.6,795.8 1280.0,805.0 1261.7,809.6 1252.5,828.0 1241.0,800.4" fill="#a0967f" opacity="0.95" filter="url(#b1)"/>
<polygon points="1261.7,727.0 1288.7,727.0 1288.7,768.0 1261.7,768.0" fill="#77736a" opacity="0.70" filter="url(#b1)"/>
<polygon points="1390.0,773.0 1440.4,773.0 1440.4,809.6 1409.0,808.8 1390.7,799.5" fill="#a0967f" opacity="0.90" filter="url(#b1)"/>
<polygon points="1435.8,786.7 1484.0,782.0 1485.7,826.8 1441.9,815.8" fill="#3e403a" opacity="0.95" filter="url(#b1)"/>
<polygon points="1069.0,743.0 1106.0,743.0 1106.0,768.0 1082.4,772.0 1072.7,758.4" fill="#847c6a" opacity="0.70" filter="url(#b1)"/>
<polygon points="1156.0,743.0 1188.0,743.0 1189.0,799.0 1163.8,797.0 1163.8,776.0" fill="#847c6a" opacity="0.70" filter="url(#b1)"/>
<polygon points="1163.0,686.0 1197.0,686.0 1197.0,776.0 1163.0,776.0" fill="#7c8080" opacity="0.45" filter="url(#b2)"/>
<polygon points="1372.6,668.0 1414.6,668.0 1414.6,699.0 1372.6,699.0" fill="#9a907c" opacity="0.70" filter="url(#b1)"/>
<polygon points="1404.0,647.0 1432.0,647.0 1432.0,668.0 1404.0,668.0" fill="#4e4c43" opacity="0.65" filter="url(#b1)"/>
<polygon points="1522.0,564.0 1637.0,560.0 1646.5,574.0 1725.6,632.0 1741.9,664.7 1741.9,692.6 1704.7,767.0 1660.0,827.4 1581.0,929.8 1562.8,929.8 1529.0,869.5" fill="#4a4f47" opacity="0.95" filter="url(#b1)"/>
<polygon points="1530.8,588.4 1557.0,567.5 1604.0,554.4 1638.0,557.0 1638.0,572.7 1625.0,588.4 1598.8,578.0 1567.5,572.7 1536.0,596.2" fill="#a0967f" opacity="0.85" filter="url(#b1)"/>
<polygon points="1640.7,598.8 1700.0,615.0 1740.0,665.0 1740.0,700.0 1720.0,724.4 1680.0,715.0 1650.0,690.0" fill="#686862" opacity="0.85" filter="url(#b1)"/>
<polygon points="1646.0,609.0 1700.0,625.0 1724.0,660.0 1700.0,693.0 1660.0,680.0" fill="#4a4f47" opacity="0.70" filter="url(#b1)"/>
<polygon points="1530.8,661.6 1557.0,653.8 1593.6,651.2 1612.0,659.0 1614.5,682.6 1598.8,698.3 1567.5,706.1 1541.3,700.9 1530.8,682.6" fill="#9aacb2" opacity="0.95" filter="url(#b1)"/>
<polygon points="1649.9,762.0 1656.3,772.8 1613.6,811.2 1588.0,824.0 1579.5,817.6 1600.9,798.4 1635.0,772.8" fill="#98aaae" opacity="0.90" filter="url(#b1)"/>
<polygon points="1600.0,836.0 1635.0,840.0 1630.0,856.0 1600.0,862.0" fill="#98aaae" opacity="0.80" filter="url(#b1)"/>
<polygon points="1560.0,860.0 1590.0,840.0 1592.0,870.0 1575.0,905.0 1565.0,926.0 1552.0,900.0" fill="#98aaae" opacity="0.75" filter="url(#b1)"/>
<polygon points="1532.0,745.0 1552.0,760.0 1571.0,800.0 1565.0,812.0 1545.0,790.0 1530.0,770.0" fill="#98aaae" opacity="0.70" filter="url(#b1)"/>
<path d="M1528.4,738.7 C1531.2,742.2 1539.3,751.5 1545.0,760.0 C1550.7,768.5 1556.8,779.2 1562.5,789.9 C1568.2,800.6 1578.8,811.9 1579.5,824.0 C1580.2,836.1 1570.2,848.8 1566.7,862.3 C1563.2,875.8 1558.9,894.3 1558.2,905.0 C1557.5,915.7 1561.8,922.8 1562.5,926.3" fill="none" stroke="#2e383c" stroke-width="4.0" opacity="0.75" stroke-linejoin="round" stroke-linecap="round"/>
<polygon points="1724.5,649.0 1741.5,664.0 1741.5,692.0 1730.0,696.0" fill="#98aaae" opacity="0.70" filter="url(#b1)"/>
<ellipse cx="1695.0" cy="713.0" rx="12.0" ry="7.0" fill="#98aaae" opacity="0.70" transform="rotate(0 1695.0 713.0)" filter="url(#b1)"/>
<polygon points="1651.0,735.0 1714.0,740.0 1700.0,780.0 1670.0,800.0 1651.0,790.0" fill="#847c6a" opacity="0.60" filter="url(#b1)"/>
<polygon points="1522.0,600.0 1555.0,610.0 1560.0,640.0 1528.0,650.0" fill="#606258" opacity="0.60" filter="url(#b1)"/>
<rect x="720" y="90" width="1030" height="845" filter="url(#nz4)" opacity="0.35"/>
<rect x="720" y="90" width="1030" height="845" filter="url(#nz1)" opacity="0.3"/>
<rect x="720" y="90" width="1030" height="845" filter="url(#nz2)" opacity="0.5"/>
</g>
</svg>
</div>
<!-- frame lines -->
<div class="a" style="left:1918px;top:44px;width:2px;height:969px;background:#999"></div>
<div class="a" style="left:640px;top:1011px;width:1280px;height:2px;background:#999"></div>
<div class="a" style="left:0;top:1011px;width:634px;height:2px;background:#8a8a8a"></div>
<div id="status">
  <div class="sp" style="left:2px;width:96px">MapsID: 4505</div>
  <div class="sp" style="left:101px;width:77px">png</div>
  <div class="sp" style="left:181px;width:97px">MinZoom: 11</div>
  <div class="sp" style="left:281px;width:97px">MaxZoom: 19</div>
  <div class="sp" style="left:381px;width:97px">TileSize: 256</div>
  <div class="sp" style="left:481px;width:99px">EPSG:3857</div>
  <div class="sp" style="left:582px;width:1337px;padding-left:2px;letter-spacing:0.27px">Longitude=13.606567, Latitude=52.509953, tile=11/1101/671.png</div>
</div>
</body></html>
